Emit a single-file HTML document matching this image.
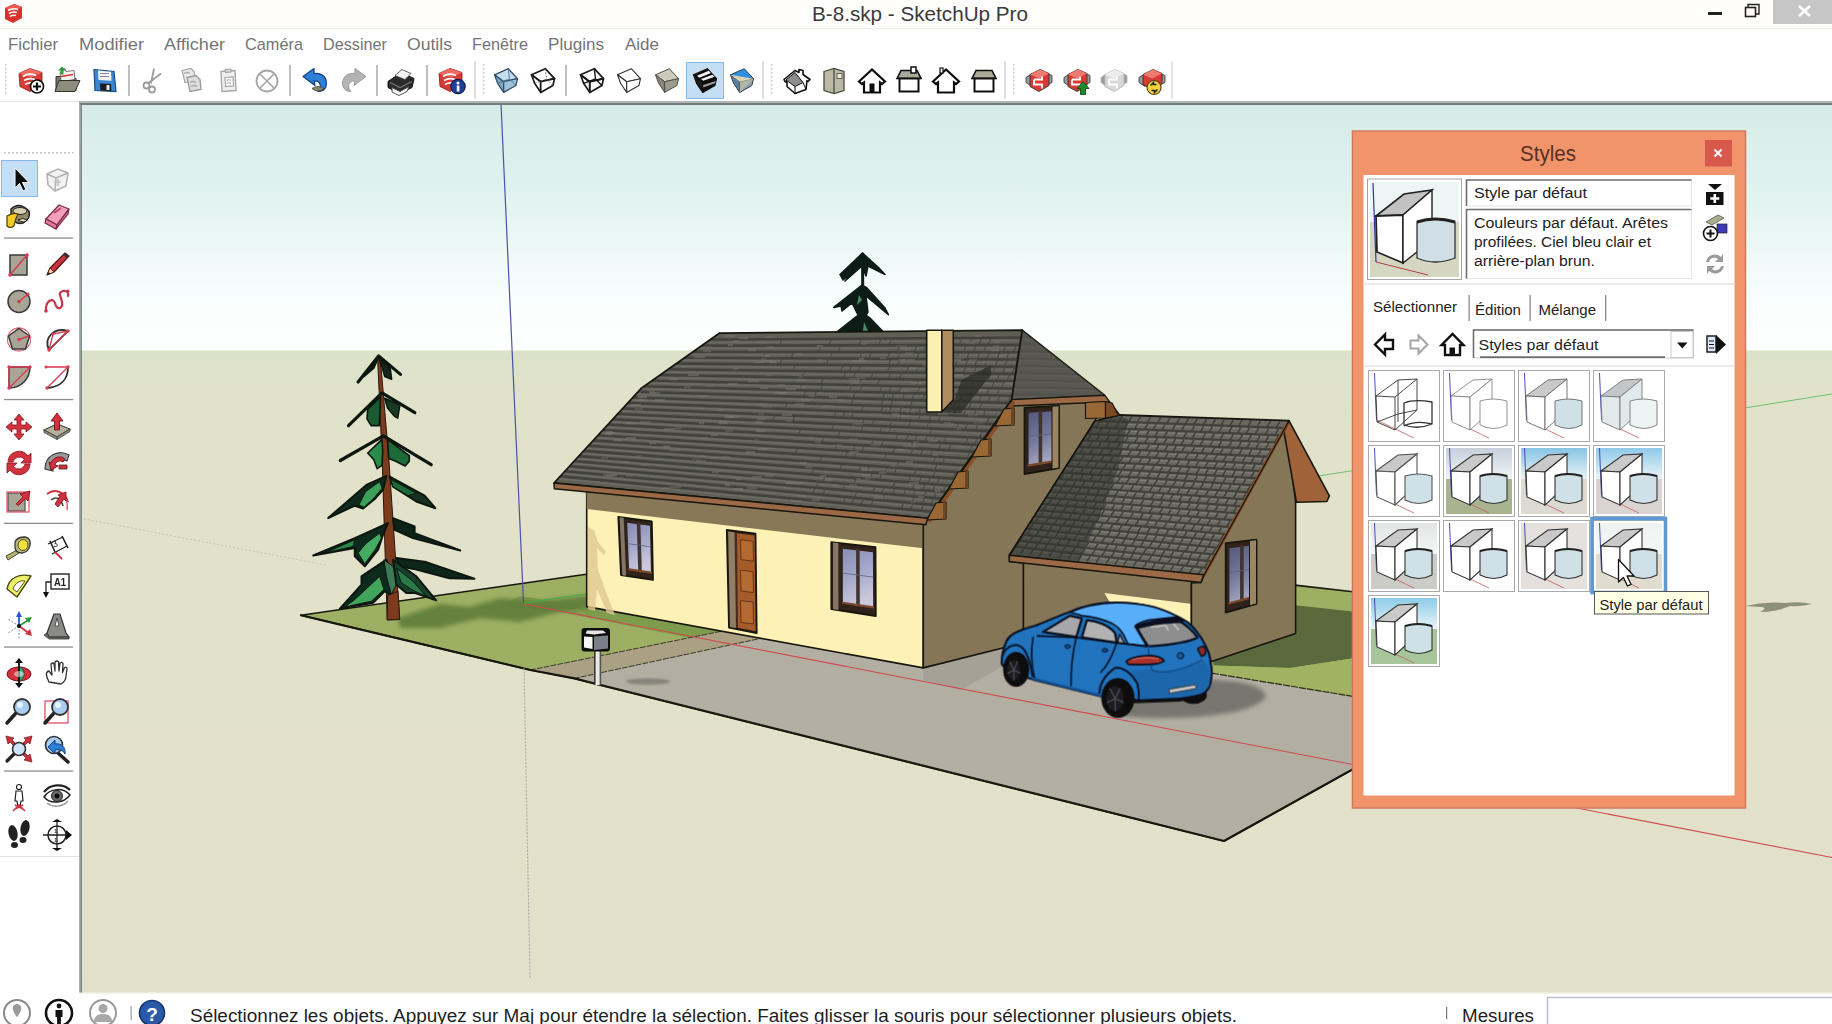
<!DOCTYPE html>
<html lang="fr"><head><meta charset="utf-8"><title>B-8.skp - SketchUp Pro</title>
<style>
*{box-sizing:border-box;margin:0;padding:0}
html,body{width:1832px;height:1024px;overflow:hidden;background:#fff;font-family:"Liberation Sans", "DejaVu Sans", sans-serif}
#app{position:relative;width:1832px;height:1024px;overflow:hidden;background:#fff}
.abs{position:absolute}
#titlebar{left:0;top:0;width:1832px;height:29px;background:#fffefc;border-bottom:1px solid #ececea}
#menubar{left:0;top:30px;width:1832px;height:29px;background:#fff}
#toolbar{left:0;top:59px;width:1832px;height:42px;background:#fff}
#lefttools{left:0;top:101px;width:80px;height:893px;background:#fff}
#viewport{left:79px;top:101px;width:1753px;height:893px;background:#e2e0c8;overflow:hidden}
#statusbar{left:0;top:994px;width:1832px;height:30px;background:#fff}
#overlay{left:0;top:0;width:1832px;height:1024px;pointer-events:none}
svg{display:block}
svg text{font-family:"Liberation Sans", "DejaVu Sans", sans-serif}
</style></head><body><div id="app">
<div id="titlebar" class="abs"><svg width="1832" height="29" viewBox="0 0 1832 29">
<g transform="translate(3,2)"><path d="M2 6 L11 2 L19 5 L19 16 L10 21 L2 17 Z" fill="#d8322f"/><path d="M2 6 L11 2 L19 5 L10 9 Z" fill="#ee5a52"/><path d="M5 8.5 q5 -3 10 -1 M6 11.5 q4 -2.5 8 -1 M7 14.5 q3 -2 6 -1" stroke="#fff" stroke-width="1.5" fill="none"/></g>
<text x="812" y="21" font-size="21" fill="#3a3a3a" text-anchor="start" font-weight="normal" textLength="216" lengthAdjust="spacingAndGlyphs">B-8.skp - SketchUp Pro</text>
<rect x="1708" y="12" width="14" height="3" fill="#222"/>
<rect x="1745.5" y="7.5" width="10" height="9" fill="none" stroke="#222" stroke-width="1.6"/><path d="M1748 7 V4.5 H1759 V14 H1756" fill="none" stroke="#222" stroke-width="1.4"/>
<rect x="1773" y="0" width="59" height="24" fill="#c6c6c6"/>
<path d="M1799 6 L1810 16 M1810 6 L1799 16" stroke="#fff" stroke-width="2.6"/>
</svg></div>
<div id="menubar" class="abs"><svg width="1832" height="29" viewBox="0 30 1832 29">
<text x="8" y="50" font-size="17" fill="#747474" text-anchor="start" font-weight="normal" textLength="50" lengthAdjust="spacingAndGlyphs">Fichier</text>
<text x="79" y="50" font-size="17" fill="#747474" text-anchor="start" font-weight="normal" textLength="65" lengthAdjust="spacingAndGlyphs">Modifier</text>
<text x="164" y="50" font-size="17" fill="#747474" text-anchor="start" font-weight="normal" textLength="61" lengthAdjust="spacingAndGlyphs">Afficher</text>
<text x="245" y="50" font-size="17" fill="#747474" text-anchor="start" font-weight="normal" textLength="58" lengthAdjust="spacingAndGlyphs">Caméra</text>
<text x="323" y="50" font-size="17" fill="#747474" text-anchor="start" font-weight="normal" textLength="64" lengthAdjust="spacingAndGlyphs">Dessiner</text>
<text x="407" y="50" font-size="17" fill="#747474" text-anchor="start" font-weight="normal" textLength="45" lengthAdjust="spacingAndGlyphs">Outils</text>
<text x="472" y="50" font-size="17" fill="#747474" text-anchor="start" font-weight="normal" textLength="56" lengthAdjust="spacingAndGlyphs">Fenêtre</text>
<text x="548" y="50" font-size="17" fill="#747474" text-anchor="start" font-weight="normal" textLength="56" lengthAdjust="spacingAndGlyphs">Plugins</text>
<text x="625" y="50" font-size="17" fill="#747474" text-anchor="start" font-weight="normal" textLength="34" lengthAdjust="spacingAndGlyphs">Aide</text>
</svg></div>
<div id="toolbar" class="abs"><svg width="1832" height="42" viewBox="0 59 1832 42"><defs><filter id="isoft"><feGaussianBlur stdDeviation="0.400"/></filter></defs>
<rect x="5" y="64" width="1.500" height="1.500" fill="#c2c2c2"/><rect x="5" y="68" width="1.500" height="1.500" fill="#c2c2c2"/><rect x="5" y="72" width="1.500" height="1.500" fill="#c2c2c2"/><rect x="5" y="76" width="1.500" height="1.500" fill="#c2c2c2"/><rect x="5" y="80" width="1.500" height="1.500" fill="#c2c2c2"/><rect x="5" y="84" width="1.500" height="1.500" fill="#c2c2c2"/><rect x="5" y="88" width="1.500" height="1.500" fill="#c2c2c2"/><rect x="5" y="92" width="1.500" height="1.500" fill="#c2c2c2"/>
<rect x="686.500" y="62.500" width="37" height="36" fill="#c3def5" stroke="#86b8ea" stroke-width="1"/>
<g filter="url(#isoft)">
<g transform="translate(15.0,64.5) scale(1.0)"><path d="M4 9 L15 4 L27 8 L27 21 L15 27 L5 22 Z" fill="#d63a35" stroke="#7e1c1a" stroke-width="0.8"/><path d="M4 9 L15 4 L27 8 L16 13 Z" fill="#ef6a60"/><path d="M8 12 q6 -4 13 -1 M9 16 q5 -3 11 -1 M10 20 q4 -2.500 9 -1" stroke="#fff" stroke-width="1.800" fill="none"/><circle cx="22" cy="22" r="6.500" fill="#fff" stroke="#111" stroke-width="1.600"/><path d="M22 18 v8 M18 22 h8" stroke="#111" stroke-width="2.200"/></g>
<g transform="translate(51.0,64.5) scale(1.0)"><path d="M5 12 h8 l2 2 h10 v12 h-20 z" fill="#7a7a6c" stroke="#33332a" stroke-width="1"/><path d="M9 8 l5 -4 l1 3 l8 -1 l1 9 l-14 2 z" fill="#f4f4f0" stroke="#555" stroke-width="0.800"/><path d="M10 4 l4 4 h-2.500 v4 h-3 v-4 h-2.500 z" fill="#2f9a3e" transform="translate(1,-2)"/><path d="M4 27 l4 -11 h21 l-5 11 z" fill="#8d8d7e" stroke="#33332a" stroke-width="1"/><path d="M10 12 l12 -2" stroke="#d33" stroke-width="1.500"/></g>
<g transform="translate(89.0,64.5) scale(1.0)"><path d="M5 5 l20 2 l2 20 l-21 -1 z" fill="#3a86d2" stroke="#1a4a88" stroke-width="1.200"/><path d="M9 6 l13 1.200 l0.500 9 l-13 -0.800 z" fill="#f2f2f2"/><path d="M11 9 h9 M11 12 h9" stroke="#7a8db0" stroke-width="1.200"/><path d="M11 19 l11 0.600 l0.400 7 l-11 -0.500 z" fill="#1c1c1c"/><rect x="17.500" y="20.500" width="3" height="5" fill="#e8e8e8"/></g>
<rect x="128.5" y="65" width="1" height="31" fill="#808080"/>
<g transform="translate(137.0,64.5) scale(1.0)"><path d="M17 4 L14 19 M24 9 L11 19" stroke="#9c9c9c" stroke-width="1.800" fill="none"/><circle cx="9.500" cy="21" r="3" fill="none" stroke="#9c9c9c" stroke-width="1.800"/><circle cx="15" cy="25" r="3" fill="none" stroke="#9c9c9c" stroke-width="1.800"/></g>
<g transform="translate(175.0,64.5) scale(1.0)"><path d="M7 6 l9 -2 l3 3 l1 9 l-10 2 z" fill="#e9e9e9" stroke="#a5a5a5" stroke-width="1.200"/><path d="M12 13 l9 -2 l4 4 l1 10 l-11 2 z" fill="#dcdcdc" stroke="#9a9a9a" stroke-width="1.300"/><path d="M9 9 q3 -2 6 0 M15 18 q3 -2 6 0 M16 22 q3 -2 6 0" stroke="#a9a9a9" stroke-width="1.400" fill="none"/></g>
<g transform="translate(213.0,64.5) scale(1.0)"><path d="M8 7 l14 -1 l1 20 l-14 1 z" fill="#efefef" stroke="#a8a8a8" stroke-width="1.400"/><path d="M12 5 l6 -0.500 l0.300 3 l-6 0.500 z" fill="#d5d5d5" stroke="#a0a0a0" stroke-width="1"/><path d="M12 13 l8 -0.600 l0.600 9 l-8 0.600 z" fill="#fafafa" stroke="#a8a8a8" stroke-width="1.200"/><path d="M14 16 q2 -1.500 4 0 M14 19 q2 -1.500 4 0" stroke="#aaa" stroke-width="1.200" fill="none"/></g>
<g transform="translate(251.0,64.5) scale(1.0)"><circle cx="16" cy="16.500" r="10.500" fill="#fff" stroke="#a5a5a5" stroke-width="1.800"/><path d="M9 9.500 l14 14 M23 9.500 l-14 14" stroke="#a5a5a5" stroke-width="1.600"/></g>
<rect x="289.5" y="65" width="1" height="31" fill="#808080"/>
<g transform="translate(300.0,64.5) scale(1.0)"><path d="M3 12 L14 4 L14 9 C22 8 28 13 26 22 C25 25 22 27 18 27 C22 23 21 16 14 16.500 L15 21 Z" fill="#2f7fd6" stroke="#123f80" stroke-width="1.200" stroke-linejoin="round"/><path d="M12 24 q6 -4 12 0 q-6 5 -12 0 z" fill="#8a8468" stroke="#4a4630" stroke-width="0.800"/></g>
<g transform="translate(337.0,64.5) scale(1.0)"><path d="M29 12 L18 4 L18 9 C10 8 4 13 6 22 C7 25 10 27 14 27 C10 23 11 16 18 16.500 L17 21 Z" fill="#b4b4b4" stroke="#9a9a9a" stroke-width="1" stroke-linejoin="round"/></g>
<rect x="376.5" y="65" width="1" height="31" fill="#808080"/>
<g transform="translate(385.0,64.5) scale(1.0)"><path d="M3 17 l13 -9 l13 6 l-2 9 l-12 6 l-12 -6 z" fill="#2a2a2a" stroke="#111" stroke-width="1"/><path d="M10 11 l7 -6 l9 4 l-6 6 z" fill="#f4f4f4" stroke="#555" stroke-width="0.900"/><path d="M7 23 l8 4 l9 -5 l-2 5 l-8 4 l-7 -3.500 z" fill="#fafafa" stroke="#444" stroke-width="0.900"/><path d="M5 18 l10 5 l12 -6" stroke="#777" stroke-width="1.200" fill="none"/></g>
<rect x="426.5" y="65" width="1" height="31" fill="#808080"/>
<g transform="translate(435.0,64.5) scale(1.0)"><path d="M4 9 L15 4 L27 8 L27 21 L15 27 L5 22 Z" fill="#d63a35" stroke="#7e1c1a" stroke-width="0.8"/><path d="M4 9 L15 4 L27 8 L16 13 Z" fill="#ef6a60"/><path d="M8 12 q6 -4 13 -1 M9 16 q5 -3 11 -1 M10 20 q4 -2.500 9 -1" stroke="#fff" stroke-width="1.800" fill="none"/><circle cx="23" cy="22" r="7.200" fill="#1f3f9a" stroke="#0d1f55" stroke-width="1.200"/><circle cx="23" cy="18.500" r="1.500" fill="#fff"/><rect x="21.800" y="21" width="2.600" height="6" fill="#fff"/></g>
<rect x="474.4" y="61" width="1.200" height="38" fill="#c9c9c9"/><rect x="483" y="64" width="1.500" height="1.500" fill="#c2c2c2"/><rect x="483" y="68" width="1.500" height="1.500" fill="#c2c2c2"/><rect x="483" y="72" width="1.500" height="1.500" fill="#c2c2c2"/><rect x="483" y="76" width="1.500" height="1.500" fill="#c2c2c2"/><rect x="483" y="80" width="1.500" height="1.500" fill="#c2c2c2"/><rect x="483" y="84" width="1.500" height="1.500" fill="#c2c2c2"/><rect x="483" y="88" width="1.500" height="1.500" fill="#c2c2c2"/><rect x="483" y="92" width="1.500" height="1.500" fill="#c2c2c2"/>
<g transform="translate(490.0,64.5) scale(1.0)"><path d="M4.5 10.3 L18.3 4.2 L27.5 14.2 L13.7 17.2 Z" fill="#c3dcee" stroke="#34506a" stroke-width="1.3" stroke-linejoin="round"/><path d="M4.5 10.3 L13.7 17.2 L13.7 27.9 L7.6 18.8 Z" fill="#7fa8c6" stroke="#34506a" stroke-width="1.3" stroke-linejoin="round"/><path d="M13.7 17.2 L27.5 14.2 L25.9 21 L13.7 27.9 Z" fill="#9fc3dc" stroke="#34506a" stroke-width="1.3" stroke-linejoin="round"/><path d="M18.3 4.2 L19.5 14.5 L7.6 18.8 M19.5 14.5 L25.9 21" stroke="#4d7390" stroke-width="0.9" fill="none"/></g>
<g transform="translate(527.0,64.5) scale(1.0)"><path d="M4.5 10.3 L18.3 4.2 L27.5 14.2 L13.7 17.2 Z" fill="#fff" stroke="#1a1a1a" stroke-width="1.7" stroke-linejoin="round"/><path d="M4.5 10.3 L13.7 17.2 L13.7 27.9 L7.6 18.8 Z" fill="#fff" stroke="#1a1a1a" stroke-width="1.7" stroke-linejoin="round"/><path d="M13.7 17.2 L27.5 14.2 L25.9 21 L13.7 27.9 Z" fill="#fff" stroke="#1a1a1a" stroke-width="1.7" stroke-linejoin="round"/><path d="M18.3 4.2 L19.5 14.5 L7.6 18.8 M19.5 14.5 L25.9 21" stroke="#666" stroke-width="0.9" fill="none" stroke-dasharray="2 1.500"/></g>
<rect x="565.5" y="65" width="1" height="31" fill="#808080"/>
<g transform="translate(576.0,64.5) scale(1.0)"><path d="M4.5 10.3 L18.3 4.2 L27.5 14.2 L13.7 17.2 Z" fill="none" stroke="#1a1a1a" stroke-width="1.7" stroke-linejoin="round"/><path d="M4.5 10.3 L13.7 17.2 L13.7 27.9 L7.6 18.8 Z" fill="none" stroke="#1a1a1a" stroke-width="1.7" stroke-linejoin="round"/><path d="M13.7 17.2 L27.5 14.2 L25.9 21 L13.7 27.9 Z" fill="none" stroke="#1a1a1a" stroke-width="1.7" stroke-linejoin="round"/><path d="M18.3 4.2 L19.5 14.5 L7.6 18.8 M19.5 14.5 L25.9 21" stroke="#1a1a1a" stroke-width="1.4" fill="none"/></g>
<g transform="translate(613.0,64.5) scale(1.0)"><path d="M4.5 10.3 L18.3 4.2 L27.5 14.2 L13.7 17.2 Z" fill="#fff" stroke="#333" stroke-width="1.1" stroke-linejoin="round"/><path d="M4.5 10.3 L13.7 17.2 L13.7 27.9 L7.6 18.8 Z" fill="#fff" stroke="#333" stroke-width="1.1" stroke-linejoin="round"/><path d="M13.7 17.2 L27.5 14.2 L25.9 21 L13.7 27.9 Z" fill="#fff" stroke="#333" stroke-width="1.1" stroke-linejoin="round"/></g>
<g transform="translate(651.0,64.5) scale(1.0)"><path d="M4.5 10.3 L18.3 4.2 L27.5 14.2 L13.7 17.2 Z" fill="#cbcbbd" stroke="#4f4f45" stroke-width="1.0" stroke-linejoin="round"/><path d="M4.5 10.3 L13.7 17.2 L13.7 27.9 L7.6 18.8 Z" fill="#85857a" stroke="#4f4f45" stroke-width="1.0" stroke-linejoin="round"/><path d="M13.7 17.2 L27.5 14.2 L25.9 21 L13.7 27.9 Z" fill="#9b9b8c" stroke="#4f4f45" stroke-width="1.0" stroke-linejoin="round"/></g>
<g transform="translate(689.0,64.5) scale(1.0)"><path d="M4.5 10.3 L18.3 4.2 L27.5 14.2 L13.7 17.2 Z" fill="#0d0d0d" stroke="#0d0d0d" stroke-width="1.2" stroke-linejoin="round"/><path d="M4.5 10.3 L13.7 17.2 L13.7 27.9 L7.6 18.8 Z" fill="#1a1a1a" stroke="#0d0d0d" stroke-width="1.2" stroke-linejoin="round"/><path d="M13.7 17.2 L27.5 14.2 L25.9 21 L13.7 27.9 Z" fill="#0d0d0d" stroke="#0d0d0d" stroke-width="1.2" stroke-linejoin="round"/><path d="M8 11.2 L19.8 6.2 L21.8 8.4 L10.4 13.2 Z M12 14.600 L23.6 10.2 L25.6 12.3 L14.2 16.2 Z" fill="#f4f4f4"/><path d="M14.2 20.5 L26.6 16.6 L26.2 18.8 L14.2 23 Z" fill="#9a9a9a"/></g>
<g transform="translate(726.0,64.5) scale(1.0)"><path d="M4.5 10.3 L18.3 4.2 L27.5 14.2 L13.7 17.2 Z" fill="#2e8ee0" stroke="#2a3f55" stroke-width="1.0" stroke-linejoin="round"/><path d="M4.5 10.3 L13.7 17.2 L13.7 27.9 L7.6 18.8 Z" fill="#5d7f9c" stroke="#2a3f55" stroke-width="1.0" stroke-linejoin="round"/><path d="M13.7 17.2 L27.5 14.2 L25.9 21 L13.7 27.9 Z" fill="#8da2ae" stroke="#2a3f55" stroke-width="1.0" stroke-linejoin="round"/><path d="M4.5 10.3 L27.5 14.2 L13.7 17.2 Z" fill="#d9d2b0"/><path d="M13.7 17.2 L27.5 14.2 L13.7 27.9 Z" fill="#c5bfa0" opacity="0.700"/></g>
<rect x="762.4" y="61" width="1.200" height="38" fill="#c9c9c9"/><rect x="771" y="64" width="1.500" height="1.500" fill="#c2c2c2"/><rect x="771" y="68" width="1.500" height="1.500" fill="#c2c2c2"/><rect x="771" y="72" width="1.500" height="1.500" fill="#c2c2c2"/><rect x="771" y="76" width="1.500" height="1.500" fill="#c2c2c2"/><rect x="771" y="80" width="1.500" height="1.500" fill="#c2c2c2"/><rect x="771" y="84" width="1.500" height="1.500" fill="#c2c2c2"/><rect x="771" y="88" width="1.500" height="1.500" fill="#c2c2c2"/><rect x="771" y="92" width="1.500" height="1.500" fill="#c2c2c2"/>
<g transform="translate(781.0,64.5) scale(1.0)"><path d="M3 15 L14 6 L18 8 L18 5 L22 6 L22 10 L29 15 L27 17 L26 16 L25 25 L14 29 L6 22 L6 17 L4.500 17.500 Z" fill="#fff" stroke="#111" stroke-width="1.600" stroke-linejoin="round"/><path d="M5 15.500 L14 8 L22 18 L14 22 Z" fill="#8d8d8d" stroke="#111" stroke-width="1"/><path d="M14 22 V29 M22 18 L25 25" stroke="#111" stroke-width="1" fill="none"/></g>
<g transform="translate(818.0,64.5) scale(1.0)"><path d="M6 7 L16 4 L26 7 L26 26 L16 29 L6 26 Z" fill="#b9b9a6" stroke="#4a4a3f" stroke-width="1.300"/><path d="M16 4 V29" stroke="#4a4a3f" stroke-width="1.300"/><rect x="19" y="9" width="5" height="5" fill="#e8e8dc" stroke="#4a4a3f" stroke-width="0.800"/></g>
<g transform="translate(856.0,64.5) scale(1.0)"><path d="M3 17 L16 5 L29 17 L26 19.500 L24 18 V28 H8 V18 L6 19.500 Z" fill="#fff" stroke="#111" stroke-width="2.200" stroke-linejoin="miter"/><rect x="13.500" y="19" width="5" height="9" fill="#111"/></g>
<g transform="translate(893.0,64.5) scale(1.0)"><path d="M4 14 L8 6 H24 L28 14 Z" fill="#a9a99a" stroke="#111" stroke-width="1.600"/><rect x="6.500" y="14" width="19" height="13" fill="#fff" stroke="#111" stroke-width="2"/><rect x="18" y="2.500" width="5" height="6" fill="#fff" stroke="#111" stroke-width="1.500"/></g>
<g transform="translate(930.0,64.5) scale(1.0)"><path d="M3 17 L16 5 L29 17 L26 19.500 L24 18 V28 H8 V18 L6 19.500 Z" fill="#fff" stroke="#111" stroke-width="2.200"/><rect x="10" y="3.500" width="3" height="5" fill="#fff" stroke="#111" stroke-width="1.200"/></g>
<g transform="translate(968.0,64.5) scale(1.0)"><path d="M4 14 L8 6 H24 L28 14 Z" fill="#a9a99a" stroke="#111" stroke-width="1.600"/><rect x="6.500" y="14" width="19" height="13" fill="#fff" stroke="#111" stroke-width="2"/></g>
<rect x="1004.4" y="61" width="1.200" height="38" fill="#c9c9c9"/><rect x="1013" y="64" width="1.500" height="1.500" fill="#c2c2c2"/><rect x="1013" y="68" width="1.500" height="1.500" fill="#c2c2c2"/><rect x="1013" y="72" width="1.500" height="1.500" fill="#c2c2c2"/><rect x="1013" y="76" width="1.500" height="1.500" fill="#c2c2c2"/><rect x="1013" y="80" width="1.500" height="1.500" fill="#c2c2c2"/><rect x="1013" y="84" width="1.500" height="1.500" fill="#c2c2c2"/><rect x="1013" y="88" width="1.500" height="1.500" fill="#c2c2c2"/><rect x="1013" y="92" width="1.500" height="1.500" fill="#c2c2c2"/>
<g transform="translate(1023.0,64.5) scale(1.0)"><path d="M3 13 L9 9 L9 22 L3 18 Z M29 11 L23 8 L23 21 L29 18 Z" fill="#9a9a9a" stroke="#333" stroke-width="0.800"/><path d="M7 10 L17 5 L26 9 L26 21 L16 27 L7 22 Z" fill="#d63a35" stroke="#333" stroke-width="0.900"/><path d="M7 10 L17 5 L26 9 L16 14 Z" fill="#f07a70"/><path d="M11 15 h8 v-3 M11 15 v5 h8 v4" stroke="#fff" stroke-width="1.800" fill="none"/></g>
<g transform="translate(1061.0,64.5) scale(1.0)"><path d="M3 13 L9 9 L9 22 L3 18 Z M29 11 L23 8 L23 21 L29 18 Z" fill="#9a9a9a" stroke="#333" stroke-width="0.800"/><path d="M7 10 L17 5 L26 9 L26 21 L16 27 L7 22 Z" fill="#d63a35" stroke="#333" stroke-width="0.900"/><path d="M7 10 L17 5 L26 9 L16 14 Z" fill="#f07a70"/><path d="M11 15 h8 v-3 M11 15 v5 h8 v4" stroke="#fff" stroke-width="1.800" fill="none"/><path d="M22 17 l6 7 h-3.500 v6 h-5 v-6 h-3.500 z" fill="#1f8a2e" stroke="#0f4f18" stroke-width="0.900"/></g>
<g transform="translate(1098.0,64.5) scale(1.0)"><path d="M3 13 L9 9 L9 22 L3 18 Z M29 11 L23 8 L23 21 L29 18 Z" fill="#9a9a9a" stroke="#b5b5b5" stroke-width="0.800"/><path d="M7 10 L17 5 L26 9 L26 21 L16 27 L7 22 Z" fill="#d8d8d8" stroke="#b5b5b5" stroke-width="0.900"/><path d="M7 10 L17 5 L26 9 L16 14 Z" fill="#ededed"/><path d="M11 15 h8 v-3 M11 15 v5 h8 v4" stroke="#fff" stroke-width="1.800" fill="none"/></g>
<g transform="translate(1136.0,64.5) scale(1.0)"><path d="M3 13 L9 9 L9 22 L3 18 Z M29 11 L23 8 L23 21 L29 18 Z" fill="#9a9a9a" stroke="#333" stroke-width="0.800"/><path d="M7 10 L17 5 L26 9 L26 19 L16 25 L7 20 Z" fill="#d63a35" stroke="#333" stroke-width="0.900"/><path d="M7 10 L17 5 L26 9 L16 14 Z" fill="#f07a70"/><circle cx="18" cy="23" r="7" fill="#f2d23c" stroke="#5a4a10" stroke-width="1.200"/><path d="M14.500 21 l3 -3 l0 2 h3 M21.500 25 l-3 3 l0 -2 h-3" stroke="#222" stroke-width="1.500" fill="none"/></g>
<rect x="1171.4" y="61" width="1.200" height="38" fill="#d5d5d5"/>
</g></svg></div>
<div id="lefttools" class="abs"><svg width="80" height="893" viewBox="0 101 80 893"><defs><filter id="lsoft"><feGaussianBlur stdDeviation="0.400"/></filter></defs>
<rect x="4" y="152" width="1.500" height="1.500" fill="#bdbdbd"/><rect x="8" y="152" width="1.500" height="1.500" fill="#bdbdbd"/><rect x="12" y="152" width="1.500" height="1.500" fill="#bdbdbd"/><rect x="16" y="152" width="1.500" height="1.500" fill="#bdbdbd"/><rect x="20" y="152" width="1.500" height="1.500" fill="#bdbdbd"/><rect x="24" y="152" width="1.500" height="1.500" fill="#bdbdbd"/><rect x="28" y="152" width="1.500" height="1.500" fill="#bdbdbd"/><rect x="32" y="152" width="1.500" height="1.500" fill="#bdbdbd"/><rect x="36" y="152" width="1.500" height="1.500" fill="#bdbdbd"/><rect x="40" y="152" width="1.500" height="1.500" fill="#bdbdbd"/><rect x="44" y="152" width="1.500" height="1.500" fill="#bdbdbd"/><rect x="48" y="152" width="1.500" height="1.500" fill="#bdbdbd"/><rect x="52" y="152" width="1.500" height="1.500" fill="#bdbdbd"/><rect x="56" y="152" width="1.500" height="1.500" fill="#bdbdbd"/><rect x="60" y="152" width="1.500" height="1.500" fill="#bdbdbd"/><rect x="64" y="152" width="1.500" height="1.500" fill="#bdbdbd"/><rect x="68" y="152" width="1.500" height="1.500" fill="#bdbdbd"/><rect x="72" y="152" width="1.500" height="1.500" fill="#bdbdbd"/>
<rect x="0" y="101" width="79" height="1" fill="#e4e4e4"/>
<rect x="1.500" y="160.500" width="36" height="36" fill="#c3def5" stroke="#86b8ea" stroke-width="1"/>
<g filter="url(#lsoft)">
<g transform="translate(3.0,163.0) scale(1.0)"><path d="M12 5 V25 L16.500 20.500 L20 28 L23 26.500 L19.500 19.500 H26 Z" fill="#111" stroke="#fff" stroke-width="1"/></g>
<g transform="translate(41.0,163.0) scale(1.0)"><path d="M6 11 L17 6 L27 10 L25 23 L14 28 L7 22 Z" fill="#f3f3f3" stroke="#b0b0b0" stroke-width="1.500"/><path d="M6 11 L15 15 L27 10 M15 15 L14 28" stroke="#b0b0b0" stroke-width="1.500" fill="none"/><path d="M13 19 h7 M17 16 v7" stroke="#c2c2c2" stroke-width="1.500"/></g>
<g transform="translate(3.0,200.0) scale(1.0)"><path d="M8 9 q8 -8 18 2 q2 8 -6 12 q-8 2 -12 -6 z" fill="#8f8a6a" stroke="#222" stroke-width="1.500"/><ellipse cx="17" cy="11" rx="7" ry="3.500" fill="#d6d2b0" stroke="#222" stroke-width="1"/><path d="M4 16 q6 -4 11 -2 q-3 5 -4 12 q-4 3 -7 0 q0 -6 0 -10 z" fill="#f0cc28" stroke="#4a3c08" stroke-width="1.200"/><path d="M15 20 q5 -3 9 0 q-3 4 -9 0 z" fill="#e8e0b8" stroke="#222" stroke-width="1"/></g>
<g transform="translate(41.0,200.0) scale(1.0)"><path d="M5 19 L18 5 L28 9 L16 25 Z" fill="#f4a0bc" stroke="#7a2a48" stroke-width="1.300" stroke-linejoin="round"/><path d="M5 19 L16 25 L15 29 L4 23 Z" fill="#e87aa0" stroke="#7a2a48" stroke-width="1.200"/><path d="M16 25 L28 9 L27 14 L15 29 Z" fill="#d9688f" stroke="#7a2a48" stroke-width="1.200"/><path d="M13 13 l7 -5" stroke="#b04a70" stroke-width="2"/></g>
<rect x="4" y="237.4" width="69" height="1.300" fill="#8e8e8e"/>
<g transform="translate(3.0,248.0) scale(1.0)"><rect x="7" y="7" width="17" height="20" fill="#a9a596" stroke="#3a3a3a" stroke-width="1.500"/><path d="M7 27 L24 7" stroke="#d83a50" stroke-width="1.500"/><circle cx="7" cy="27" r="1.800" fill="#d83a50"/><circle cx="24" cy="7" r="1.800" fill="#d83a50"/></g>
<g transform="translate(41.0,248.0) scale(1.0)"><path d="M6 27 L9 20 L24 5 L28 8 L13 24 Z" fill="#c8343a" stroke="#5a1418" stroke-width="1.200" stroke-linejoin="round"/><path d="M6 27 L9 20 L13 24 Z" fill="#e8d2a8" stroke="#5a1418" stroke-width="0.800"/><path d="M6 27 l1.500 -3 l1.800 1.800 z" fill="#222"/><path d="M24 5 L28 8 L26 10 L22 7 Z" fill="#333"/></g>
<g transform="translate(3.0,285.0) scale(1.0)"><circle cx="16" cy="16.500" r="11" fill="#a9a596" stroke="#3a3a3a" stroke-width="1.500"/><path d="M16 16.500 L25 9" stroke="#d83a50" stroke-width="1.500"/><circle cx="16" cy="16.500" r="1.800" fill="#d83a50"/><circle cx="25" cy="9" r="1.600" fill="#d83a50"/></g>
<g transform="translate(41.0,285.0) scale(1.0)"><path d="M5 26 C4 16 12 12 14 18 C16 26 22 24 21 17 C20 10 16 8 22 6 C26 5 28 8 27 11" fill="none" stroke="#c8344c" stroke-width="2.200" stroke-linecap="round"/><circle cx="5" cy="26" r="1.800" fill="#c8344c"/><circle cx="27" cy="6" r="1.600" fill="#c8344c"/></g>
<g transform="translate(3.0,323.0) scale(1.0)"><circle cx="16" cy="16.500" r="11.500" fill="none" stroke="#e06a7a" stroke-width="1.300"/><path d="M16 5.500 L26.500 13 L22.500 26 L9.500 26 L5.500 13 Z" fill="#a9a596" stroke="#3a3a3a" stroke-width="1.500"/><path d="M16 16.500 L26 13" stroke="#d83a50" stroke-width="1.400"/><circle cx="16" cy="16.500" r="1.800" fill="#d83a50"/></g>
<g transform="translate(41.0,323.0) scale(1.0)"><path d="M8 27 C2 14 14 4 27 8 Z" fill="#fff" stroke="#333" stroke-width="1.800"/><path d="M8 27 L27 8 M8 27 L12 11 L27 8" stroke="#d83a50" stroke-width="1.300" fill="none"/><circle cx="8" cy="27" r="1.700" fill="#d83a50"/><circle cx="27" cy="8" r="1.700" fill="#d83a50"/><circle cx="12" cy="11" r="1.500" fill="#d83a50"/></g>
<g transform="translate(3.0,361.0) scale(1.0)"><path d="M6 6 H27 C27 18 18 27 6 27 Z" fill="#a9a596" stroke="#3a3a3a" stroke-width="1.500"/><path d="M6 27 L27 6 M6 6 L6 27 M6 6 H27" stroke="#d83a50" stroke-width="1.300"/><circle cx="6" cy="6" r="1.700" fill="#d83a50"/><circle cx="27" cy="6" r="1.700" fill="#d83a50"/><circle cx="6" cy="27" r="1.700" fill="#d83a50"/></g>
<g transform="translate(41.0,361.0) scale(1.0)"><path d="M6 27 C20 26 27 18 27 6" fill="none" stroke="#333" stroke-width="1.800"/><path d="M6 27 L27 6 M5 6 H27" stroke="#d83a50" stroke-width="1.300" fill="none"/><circle cx="6" cy="27" r="1.700" fill="#d83a50"/><circle cx="27" cy="6" r="1.700" fill="#d83a50"/><circle cx="5" cy="6" r="1.500" fill="#d83a50"/></g>
<rect x="4" y="398.9" width="69" height="1.300" fill="#8e8e8e"/>
<g transform="translate(3.0,411.0) scale(1.0)"><path d="M16 3 L21 9 H18 V14 H23 V11 L29 16 L23 21 V18 H18 V23 H21 L16 29 L11 23 H14 V18 H9 V21 L3 16 L9 11 V14 H14 V9 H11 Z" fill="#d2303c" stroke="#8a1420" stroke-width="0.800"/></g>
<g transform="translate(41.0,411.0) scale(1.0)"><path d="M3 19 L16 13 L29 18 L16 26 Z" fill="#b5b1a0" stroke="#4a4a40" stroke-width="1.200"/><path d="M3 19 L16 26 L16 28.500 L3 21.500 Z M16 26 L29 18 V20.500 L16 28.500 Z" fill="#8d8a7a" stroke="#4a4a40" stroke-width="0.800"/><path d="M16 2 L22 10 H18.500 V19 H13.500 V10 H10 Z" fill="#d2303c" stroke="#7a1018" stroke-width="0.900"/></g>
<g transform="translate(3.0,447.0) scale(1.0)"><path d="M5 15 A11 11 0 0 1 25 9 L28 6 V16 H18 L21.500 12.500 A6.500 6.500 0 0 0 10 15 Z" fill="#d2303c" stroke="#8a1420" stroke-width="0.800"/><path d="M27 17 A11 11 0 0 1 7 23 L4 26 V16 H14 L10.500 19.500 A6.500 6.500 0 0 0 22 17 Z" fill="#d2303c" stroke="#8a1420" stroke-width="0.800"/></g>
<g transform="translate(41.0,447.0) scale(1.0)"><path d="M4 22 C4 8 18 2 28 8 L26 14 C18 10 12 14 12 24 Z" fill="#9a9a98" stroke="#444" stroke-width="1.200"/><path d="M10 16 C12 10 20 8 24 12 L22 15 C19 13 15 14 14 18 L17 19 L10 23 L8 15 Z" fill="#d2303c" stroke="#7a1018" stroke-width="0.900"/><path d="M18 18 h8 v4 h-8 z" fill="#c8343a" stroke="#5a1418" stroke-width="0.800"/></g>
<g transform="translate(3.0,484.0) scale(1.0)"><rect x="5" y="9" width="17" height="18" fill="#a9a596" stroke="#555" stroke-width="1.300"/><rect x="4" y="8" width="22" height="20" fill="none" stroke="#e05a6a" stroke-width="1.300"/><path d="M13 20 L20 13 L17 10 L27 7 L25 17 L22.500 14.500 L15.500 21.500 Z" fill="#d2303c" stroke="#7a1018" stroke-width="0.800"/></g>
<g transform="translate(41.0,484.0) scale(1.0)"><path d="M6 10 C14 4 24 8 27 18" fill="none" stroke="#d2303c" stroke-width="2"/><path d="M10 16 C15 12 20 14 22 22" fill="none" stroke="#444" stroke-width="1.600"/><path d="M26 26 C27 20 25 14 22 12" fill="none" stroke="#e06a7a" stroke-width="1.600"/><path d="M14 20 L19 12 L17 11 L25 8 L25 17 L23 15 L17 23 Z" fill="#d2303c" stroke="#7a1018" stroke-width="0.800"/></g>
<rect x="4" y="522.6999999999999" width="69" height="1.300" fill="#8e8e8e"/>
<g transform="translate(3.0,532.0) scale(1.0)"><path d="M3 24 L14 18 L16 21 L5 28 Z" fill="#b5b06a" stroke="#4a4630" stroke-width="1"/><path d="M12 10 q2 -5 10 -5 q6 1 5 8 q-1 7 -8 8 q-7 0 -7 -6 z" fill="#b8b48a" stroke="#3a3a2a" stroke-width="1.300"/><ellipse cx="20" cy="13" rx="5" ry="5.500" fill="#f0e040" stroke="#5a5410" stroke-width="1"/></g>
<g transform="translate(41.0,532.0) scale(1.0)"><path d="M7 12 L22 5 M11 22 L26 14" stroke="#222" stroke-width="1.300"/><path d="M9 9 L14 20 M21 4 L27 16" stroke="#222" stroke-width="1.600"/><path d="M14 20 L21 27" stroke="#d2303c" stroke-width="1.800"/><text x="12" y="15" font-size="9" fill="#222" transform="rotate(-25 14 13)">3</text></g>
<g transform="translate(3.0,569.0) scale(1.0)"><path d="M4 20 C6 9 16 4 28 7 L14 28 Z" fill="#eef06a" stroke="#4a4a10" stroke-width="1.400" stroke-linejoin="round"/><path d="M10 20 C12 14 17 11 22 12 L14 23 Z" fill="#fff" stroke="#4a4a10" stroke-width="0.900"/></g>
<g transform="translate(41.0,569.0) scale(1.0)"><rect x="10" y="5" width="18" height="15" fill="#fff" stroke="#222" stroke-width="1.400"/><text x="13" y="17" font-size="11" font-weight="bold" fill="#222" textLength="12" lengthAdjust="spacingAndGlyphs">A1</text><path d="M10 13 H5 V24" fill="none" stroke="#222" stroke-width="1.300"/><path d="M2 23 h6 l-3 6 z" fill="#111"/></g>
<g transform="translate(3.0,609.0) scale(1.0)"><path d="M16 17 V4" stroke="#2a5ad0" stroke-width="1.800"/><path d="M13 8 l3 -6 l3 6 z" fill="#2a5ad0"/><path d="M16 17 L27 10" stroke="#2a9a3a" stroke-width="1.800"/><path d="M22 9 l7 -1 l-3 6 z" fill="#2a9a3a"/><path d="M16 17 L27 25" stroke="#d2303c" stroke-width="1.800"/><path d="M22 25 l7 2 l-2 -7 z" fill="#d2303c"/><path d="M16 17 L5 24 M16 17 L5 10 M16 17 V30" stroke="#888" stroke-width="1" stroke-dasharray="2 1.500"/><circle cx="16" cy="17" r="2" fill="#111"/></g>
<g transform="translate(41.0,609.0) scale(1.0)"><path d="M6 24 L13 5 H19 L25 24 L28 28 H8 Z" fill="#8a8a88" stroke="#333" stroke-width="1.200"/><path d="M14 17 l2 -8 l2 8 z" fill="#fff" stroke="#333" stroke-width="0.800"/><path d="M6 24 L3 26 L8 30 L28 30 V28 H8 Z" fill="#6a6a68" stroke="#333" stroke-width="0.800"/></g>
<rect x="4" y="646.4" width="69" height="1.300" fill="#8e8e8e"/>
<g transform="translate(3.0,656.0) scale(1.0)"><ellipse cx="16" cy="18" rx="12" ry="7" fill="#d2303c" stroke="#7a1018" stroke-width="1"/><path d="M16 11 a5 7 0 0 1 0 14 z" fill="#3aa878" stroke="#155a3a" stroke-width="1"/><path d="M16 4 V30" stroke="#111" stroke-width="1.800"/><path d="M12 7 l4 -5 l4 5 z M12 27 l4 5 l4 -5 z" fill="#111"/><ellipse cx="16" cy="18" rx="5" ry="3" fill="#fff" opacity="0.500"/></g>
<g transform="translate(41.0,656.0) scale(1.0)"><path d="M8 26 C5 20 4 16 8 15 L11 19 L10 8 q2 -2 3 0 l1 7 l0 -9 q2 -2 3.500 0 l0.500 9 l1 -8 q2 -1.500 3 0.500 l-0.500 9 l2 -5 q2 -1 2.500 1 L25 20 q0 5 -5 8 z" fill="#fff" stroke="#333" stroke-width="1.300" stroke-linejoin="round"/></g>
<g transform="translate(3.0,695.0) scale(1.0)"><path d="M4 28 L14 17" stroke="#222" stroke-width="3.500" stroke-linecap="round"/><circle cx="19" cy="12" r="8" fill="#a9cdf0" stroke="#333" stroke-width="1.800"/><circle cx="17" cy="10" r="3" fill="#e6f2fc"/></g>
<g transform="translate(41.0,695.0) scale(1.0)"><rect x="4" y="6" width="23" height="22" fill="none" stroke="#e0506a" stroke-width="1.300"/><path d="M4 28 L14 17" stroke="#222" stroke-width="3.500" stroke-linecap="round"/><circle cx="19" cy="12" r="8" fill="#a9cdf0" stroke="#333" stroke-width="1.800"/><circle cx="17" cy="10" r="3" fill="#e6f2fc"/></g>
<g transform="translate(3.0,733.0) scale(1.0)"><path d="M3 3 l8 2 l-2 2 l5 5 l-2 2 l-5 -5 l-2 2 z M29 3 l-2 8 l-2 -2 l-5 5 l-2 -2 l5 -5 l-2 -2 z M29 29 l-8 -2 l2 -2 l-5 -5 l2 -2 l5 5 l2 -2 z" fill="#c8303c" stroke="#7a1018" stroke-width="0.700"/><path d="M4 28 L11 21" stroke="#222" stroke-width="3.200" stroke-linecap="round"/><circle cx="16" cy="16" r="6.500" fill="#cfe4f8" stroke="#333" stroke-width="1.600"/></g>
<g transform="translate(41.0,733.0) scale(1.0)"><path d="M17 20 L27 29" stroke="#222" stroke-width="3.500" stroke-linecap="round"/><circle cx="13" cy="12" r="8.500" fill="#a9cdf0" stroke="#333" stroke-width="1.600"/><path d="M7 14 L14 7 V11 C20 10 25 14 24 21 C22 17 18 16 14 17 V21 Z" fill="#2f7fd6" stroke="#123f80" stroke-width="1"/></g>
<rect x="4" y="770.4" width="69" height="1.300" fill="#8e8e8e"/>
<g transform="translate(3.0,781.0) scale(1.0)"><circle cx="16" cy="6" r="2.500" fill="#fff" stroke="#222" stroke-width="1.200"/><path d="M13 10 h6 l1 10 h-2 l-1 6 h-2 l-1 -6 h-2 z" fill="#fff" stroke="#222" stroke-width="1.200"/><path d="M10 30 l6 -6 l6 6 M12 24 l8 4 M20 24 l-8 4" stroke="#d2303c" stroke-width="1.500" fill="none"/></g>
<g transform="translate(41.0,781.0) scale(1.0)"><path d="M3 16 C9 7 22 6 29 14 C23 22 10 24 3 16 Z" fill="#fff" stroke="#222" stroke-width="1.500"/><circle cx="16" cy="15" r="5.500" fill="#6a6a6a" stroke="#222" stroke-width="1"/><circle cx="16" cy="15" r="2.500" fill="#111"/><path d="M3 11 C9 3 22 2 29 9" fill="none" stroke="#222" stroke-width="2.200"/><path d="M6 22 C12 27 22 26 27 20" fill="none" stroke="#999" stroke-width="1.500"/></g>
<g transform="translate(3.0,819.0) scale(1.0)"><ellipse cx="10" cy="14" rx="4.500" ry="8" fill="#222" transform="rotate(-12 10 14)"/><ellipse cx="11.500" cy="26" rx="3.500" ry="3" fill="#222"/><ellipse cx="22" cy="9" rx="4.500" ry="8" fill="#222" transform="rotate(12 22 9)"/><ellipse cx="20" cy="21" rx="3.500" ry="3" fill="#222"/></g>
<g transform="translate(41.0,819.0) scale(1.0)"><circle cx="16" cy="16" r="9" fill="#fff" stroke="#222" stroke-width="1.500"/><path d="M2 16 H30 M16 3 V29" stroke="#222" stroke-width="1.300"/><path d="M25 11 l6 5 l-6 5 z M11 3 l5 -3 l5 3 z M11 29 l5 3 l5 -3 z" fill="#111"/><text x="13" y="14" font-size="6" fill="#222">1</text><text x="13" y="23" font-size="6" fill="#222">1</text></g>
</g>
<rect x="0" y="856" width="80" height="1" fill="#e3e3e3"/>
</svg></div>
<div id="viewport" class="abs"></div>
<svg class="abs" style="left:79px;top:101px" width="1753" height="893" viewBox="79 101 1753 893">
<defs>
<linearGradient id="sky" x1="0" y1="0" x2="0" y2="1"><stop offset="0" stop-color="#d6ebe7"/><stop offset="0.39" stop-color="#e2f3f0"/><stop offset="0.63" stop-color="#f0faf8"/><stop offset="0.8" stop-color="#f8fefd"/><stop offset="1" stop-color="#ffffff"/></linearGradient>
<linearGradient id="gnd" x1="0" y1="0" x2="0" y2="1"><stop offset="0" stop-color="#dae2c8"/><stop offset="0.03" stop-color="#dfe2ca"/><stop offset="0.2" stop-color="#e2e1c9"/><stop offset="1" stop-color="#e2e0c8"/></linearGradient>
<linearGradient id="glass" x1="0" y1="0" x2="0.3" y2="1"><stop offset="0" stop-color="#868cb2"/><stop offset="0.55" stop-color="#a6abcc"/><stop offset="1" stop-color="#cbc7dc"/></linearGradient>
<linearGradient id="glass2" x1="0" y1="0" x2="0.3" y2="1"><stop offset="0" stop-color="#52577c"/><stop offset="0.6" stop-color="#777b9e"/><stop offset="1" stop-color="#a3a5be"/></linearGradient>
<pattern id="stripes" width="40" height="7.2" patternUnits="userSpaceOnUse" patternTransform="rotate(1.2)"><rect width="40" height="7.2" fill="#5d5c57"/><rect y="4.4" width="40" height="2.8" fill="#484843"/><rect y="0" width="40" height="1.2" fill="#686761"/></pattern>
<pattern id="tiles" width="13" height="12" patternUnits="userSpaceOnUse" patternTransform="rotate(4)"><rect width="13" height="12" fill="#72716a"/><rect y="4.6" width="13" height="1.6" fill="#474742"/><rect y="10.6" width="13" height="1.6" fill="#474742"/><rect x="3" y="0" width="1.2" height="5" fill="#4d4d48"/><rect x="9.5" y="6" width="1.2" height="5" fill="#4d4d48"/><rect x="0" y="0" width="13" height="1.3" fill="#787770"/><rect x="0" y="6.2" width="13" height="1.3" fill="#787770"/></pattern>
<linearGradient id="fadeg" x1="0" y1="0" x2="1" y2="0"><stop offset="0" stop-color="#fff" stop-opacity="0"/><stop offset="1" stop-color="#fff" stop-opacity="1"/></linearGradient><mask id="fade" maskUnits="userSpaceOnUse" x="700" y="320" width="340" height="220"><rect x="700" y="320" width="340" height="220" fill="url(#fadeg)"/></mask>
<filter id="soft"><feGaussianBlur stdDeviation="0.45"/></filter>
<filter id="blur1"><feGaussianBlur stdDeviation="1"/></filter>
<filter id="blur2"><feGaussianBlur stdDeviation="2"/></filter>
</defs>
<rect x="79" y="101" width="1753" height="5" fill="#d6ebe7"/><rect x="79" y="105" width="1753" height="246" fill="url(#sky)"/>
<rect x="79" y="350.5" width="1753" height="644" fill="url(#gnd)"/>
<g filter="url(#soft)">
<polyline points="862.5,254 863,332" fill="none" stroke="#0f1d16" stroke-width="3" stroke-linejoin="round" stroke-linecap="round"/>
<path d="M862.5 253 L840 274.5 L843 280 L852 272 L845 281 L862 266 L866 276 L868 266 L885 274.5 L878 267 z" fill="#0f1d16" stroke="#0f1d16" stroke-width="1.5" stroke-linejoin="round"/>
<path d="M862 285 L833.7 307.4 L841 306 L842 311 L852 303 L858 315 L862 322 L868 312 L866 296 L888.4 314.7 L885 308 L867 288 z" fill="#0f1d16" stroke="#0f1d16" stroke-width="1.5" stroke-linejoin="round"/>
<path d="M862 312 L836.6 332 L883.5 332 L870 318 z" fill="#0f1d16" stroke="#0f1d16" stroke-width="1.5" stroke-linejoin="round"/>
<path d="M859 295 L857 305 L862 300 z M864 322 L863 331 L868 331 z" fill="#4f8a66"/>
</g>
<g filter="url(#soft)">
<polyline points="524,603 1832,394" fill="none" stroke="#6fbf73" stroke-width="1.0" stroke-linejoin="round" stroke-linecap="round"/>
<path d="M1745 606 q20 -5 40 -3 q15 -2 27 1 q-14 3 -22 2 q-14 6 -30 6 q8 -4 2 -5 z" fill="#8e917a"/>
<polygon points="301,615.2 586.3,574.2 849,534 1297,585.4 1617,622 1454,713 1224,841 574.4,678.4 530.4,670" fill="#9daf62" stroke="#17170f" stroke-width="1.6" stroke-linejoin="round"/>
<polygon points="520,596 586.7,606.6 721,631.3 700,640 560,612 500,606" fill="#7f9c4e"/>
<path d="M398 618 L440 604 L470 607 L500 598 L540 601 L600 594 L640 598 L610 606 L560 612 L520 622 L480 618 L440 628 L400 628 z" fill="#5f7d3a" filter="url(#blur2)" opacity="0.9"/>
<polygon points="1295.6,605.2 1420,619 1420,650 1352,658.5 1290,668 1214,665.5 1212.5,661 1295.6,633.5" fill="#5a6b3c"/>
<polygon points="1214,665.5 1290,668 1352,658.5 1420,650 1430,708 1349.6,694.5 1212.5,673.3" fill="#a1b364"/>
<polygon points="530.4,670 574.4,678.4 761.6,638.2 721,631.3" fill="#aba084"/>
<polygon points="574.4,678.4 1224,841 1454,713 1212.5,673.3 1205,668.5 1191.4,668.2 1023.5,642.8 923.3,667.9 761.6,638.2" fill="#b2aea2"/>
<polygon points="923.3,667.9 1023.5,642.8 1023.5,650 1000,668 960,690 923.3,680" fill="#a5a197"/>
<polyline points="530.4,670 721,631.3" fill="none" stroke="#3a3a2a" stroke-width="1.0" stroke-linejoin="round" stroke-linecap="round" stroke-dasharray="5 2"/>
<polyline points="574.4,678.4 761.6,638.2" fill="none" stroke="#3a3a2a" stroke-width="1.0" stroke-linejoin="round" stroke-linecap="round" stroke-dasharray="5 2"/>
<polyline points="1212.5,673.3 1454,713" fill="none" stroke="#2a2a1a" stroke-width="1.2" stroke-linejoin="round" stroke-linecap="round" stroke-dasharray="6 2"/>
<polyline points="301,615.2 530.4,670 574.4,678.4 1224,841 1454,713" fill="none" stroke="#17170f" stroke-width="2.2" stroke-linejoin="round" stroke-linecap="round"/>
<polyline points="524,604 1832,857.5" fill="none" stroke="#cf4a4c" stroke-width="1.1" stroke-linejoin="round" stroke-linecap="round"/>
<polyline points="524,668 530,978" fill="none" stroke="#a5a5a0" stroke-width="0.9" stroke-linejoin="round" stroke-linecap="round" stroke-dasharray="1.5 2"/>
<polyline points="84,519 326,565" fill="none" stroke="#c4c4b4" stroke-width="0.9" stroke-linejoin="round" stroke-linecap="round" stroke-dasharray="1.5 2.5"/>
<polyline points="524,603 586,594" fill="none" stroke="#3fae4a" stroke-width="1.0" stroke-linejoin="round" stroke-linecap="round"/>
<path d="M1120 716 Q1180 722 1235 712 Q1272 702 1264 692 Q1250 680 1211 680 L1100 690 z" fill="#77766e" filter="url(#blur2)"/>
<ellipse cx="648" cy="681.5" rx="22" ry="3.2" fill="#85837a" filter="url(#blur1)"/>
<polygon points="586.7,487 923.3,523 923.3,667.9 586.7,606.6" fill="#fef1b6" stroke="#17170f" stroke-width="1.6" stroke-linejoin="round"/>
<polygon points="586.7,488 923.3,524.5 923.3,548.3 586.7,509" fill="#887858"/>
<path d="M588 527 l6 3 l4 12 l8 10 l-2 3 l-7 -7 l1 22 l8 22 l9 23 l-8 -2 l-10 -24 l-2 22 l-7 -2 z" fill="#e0c894" opacity="0.8"/>
<polygon points="923.3,524.5 1011.6,403 1106,398 1095,421 1009.4,555.3 1009.4,561.5 1023.5,563 1023.5,642.8 923.3,667.9" fill="#867658" stroke="#17170f" stroke-width="1.6" stroke-linejoin="round"/>
<polygon points="1024.5,407.6 1059,405.8 1059,468 1024.5,474" fill="#33221a" stroke="#17170f" stroke-width="1.8" stroke-linejoin="round"/><polygon points="1028.64,412.65568 1056.585,410.92552 1056.585,460.92072 1028.64,465.37248" fill="url(#glass2)"/><polyline points="1040.3769,411.9290128 1040.3769,463.5027408" fill="none" stroke="#40352e" stroke-width="3.6" stroke-linejoin="round" stroke-linecap="round"/><polyline points="1028.64,465.37248 1056.585,460.92072" fill="none" stroke="#7a4a2a" stroke-width="2.2" stroke-linejoin="round" stroke-linecap="round"/><polyline points="1028.64,436.37824 1056.585,433.42336" fill="none" stroke="#5a5f80" stroke-width="0.8" stroke-linejoin="round" stroke-linecap="round"/>
<polygon points="1052,406.2 1059,405.8 1059,468 1052,469.2" fill="#9d8462" stroke="#17170f" stroke-width="1" stroke-linejoin="round"/>
<polygon points="1023.5,562 1191.4,581 1191.4,668.2 1023.5,642.8" fill="#867658" stroke="#17170f" stroke-width="1.4" stroke-linejoin="round"/>
<polygon points="1104.4,593 1190.5,603.8 1190.5,645 1135,645 1112,606" fill="#fef1b6"/>
<polygon points="1286,426 1295.6,502 1295.6,633.5 1191.4,668.2 1191.4,583 1201,582.4 1203.7,575.8" fill="#867658" stroke="#17170f" stroke-width="1.6" stroke-linejoin="round"/>
<polygon points="1225.7,543.2 1256.5,539.7 1256.5,603.8 1225.7,612.6" fill="#33221a" stroke="#17170f" stroke-width="1.8" stroke-linejoin="round"/><polygon points="1229.396,548.2811200000001 1254.344,545.1026800000001 1254.344,596.67948 1229.396,603.29232" fill="url(#glass2)"/><polyline points="1241.87,546.6919 1241.87,599.9859" fill="none" stroke="#40352e" stroke-width="3.6" stroke-linejoin="round" stroke-linecap="round"/><polyline points="1229.396,603.29232 1254.344,596.67948" fill="none" stroke="#7a4a2a" stroke-width="2.2" stroke-linejoin="round" stroke-linecap="round"/><polyline points="1229.396,573.0361600000001 1254.344,568.3122400000001" fill="none" stroke="#5a5f80" stroke-width="0.8" stroke-linejoin="round" stroke-linecap="round"/>
<polygon points="1249.5,540.5 1256.5,539.7 1256.5,603.8 1249.5,605.8" fill="#9d8462" stroke="#17170f" stroke-width="1" stroke-linejoin="round"/>
<polygon points="1289,420.7 1329.4,495.8 1326.8,501.5 1296.5,502.3 1284,432" fill="#a06238" stroke="#17170f" stroke-width="1.6" stroke-linejoin="round"/>
<clipPath id="cpg"><polygon points="1095,421 1119.8,415 1289,420.7 1203.7,575.8 1009.4,555.3"/></clipPath>
<g clip-path="url(#cpg)">
<rect x="1000" y="410" width="300" height="175" fill="#6a6961"/>
<path d="M1000 417.1L1300 428.6M1000 423.5L1300 436.1M1000 429.9L1300 443.5M1000 436.3L1300 451.0M1000 442.7L1300 458.5M1000 449.1L1300 466.0M1000 455.5L1300 473.5M1000 461.9L1300 481.0M1000 468.3L1300 488.5M1000 474.7L1300 496.0M1000 481.1L1300 503.5M1000 487.5L1300 510.9M1000 493.9L1300 518.4M1000 500.3L1300 525.9M1000 506.7L1300 533.4M1000 513.1L1300 540.9M1000 519.5L1300 548.4M1000 525.9L1300 555.9M1000 532.3L1300 563.4M1000 538.7L1300 570.8M1000 545.1L1300 578.3" stroke="#42423c" stroke-width="2.2" fill="none"/>
<path d="M1000 419.5L1300 431.0M1000 425.9L1300 438.5M1000 432.3L1300 445.9M1000 438.7L1300 453.4M1000 445.1L1300 460.9M1000 451.5L1300 468.4M1000 457.9L1300 475.9M1000 464.3L1300 483.4M1000 470.7L1300 490.9M1000 477.1L1300 498.4M1000 483.5L1300 505.9M1000 489.9L1300 513.3M1000 496.3L1300 520.8M1000 502.7L1300 528.3M1000 509.1L1300 535.8M1000 515.5L1300 543.3M1000 521.9L1300 550.8M1000 528.3L1300 558.3M1000 534.7L1300 565.8M1000 541.1L1300 573.2M1000 547.5L1300 580.7" stroke="#7d7c74" stroke-width="1.3" fill="none"/>
<path d="M1000.9 411.9L997.3 417.0M1010.3 412.2L1006.7 417.4M1020.3 412.6L1016.7 417.8M1029.6 412.9L1026.0 418.1M1039.0 413.2L1035.4 418.5M1048.5 413.5L1044.9 418.8M1057.3 413.8L1053.7 419.2M1066.7 414.2L1063.1 419.5M1076.3 414.5L1072.7 419.9M1086.1 414.8L1082.5 420.3M1094.8 415.1L1091.2 420.6M1103.8 415.4L1100.2 420.9M1112.6 415.8L1109.0 421.3M1122.4 416.1L1118.8 421.7M1132.0 416.4L1128.4 422.0M1140.7 416.7L1137.1 422.4M1150.8 417.1L1147.2 422.7M1160.8 417.4L1157.2 423.1M1170.4 417.7L1166.8 423.5M1179.9 418.1L1176.3 423.9M1188.8 418.4L1185.2 424.2M1197.4 418.7L1193.8 424.5M1206.8 419.0L1203.2 424.9M1215.5 419.3L1211.9 425.2M1224.4 419.6L1220.8 425.5M1233.3 419.9L1229.7 425.9M1242.0 420.2L1238.4 426.2M1251.3 420.5L1247.7 426.6M1260.5 420.9L1256.9 426.9M1270.4 421.2L1266.8 427.3M1279.8 421.5L1276.2 427.7M1289.3 421.9L1285.7 428.0M1298.7 422.2L1295.1 428.4M1005.4 418.3L1001.8 423.6M1014.4 418.7L1010.8 424.0M1024.5 419.1L1020.9 424.4M1034.6 419.4L1031.0 424.8M1044.5 419.8L1040.9 425.2M1054.1 420.2L1050.5 425.6M1063.2 420.5L1059.6 426.0M1072.2 420.9L1068.6 426.4M1081.2 421.2L1077.6 426.8M1089.9 421.6L1086.3 427.1M1099.6 421.9L1096.0 427.5M1108.9 422.3L1105.3 427.9M1118.7 422.7L1115.1 428.3M1127.9 423.0L1124.3 428.7M1137.9 423.4L1134.3 429.1M1147.8 423.8L1144.2 429.5M1156.4 424.1L1152.8 429.9M1165.3 424.4L1161.7 430.3M1175.3 424.8L1171.7 430.7M1184.6 425.2L1181.0 431.1M1194.7 425.6L1191.1 431.5M1203.9 425.9L1200.3 431.9M1212.6 426.2L1209.0 432.3M1222.1 426.6L1218.5 432.7M1231.9 427.0L1228.3 433.1M1240.9 427.3L1237.3 433.4M1249.6 427.6L1246.0 433.8M1258.7 428.0L1255.1 434.2M1268.8 428.4L1265.2 434.6M1278.5 428.7L1274.9 435.0M1287.3 429.1L1283.7 435.4M1296.2 429.4L1292.6 435.7M1000.1 424.5L996.5 429.8M1009.9 424.9L1006.3 430.2M1018.8 425.3L1015.2 430.6M1028.2 425.7L1024.6 431.0M1037.5 426.1L1033.9 431.5M1046.4 426.5L1042.8 431.9M1056.1 426.9L1052.5 432.3M1064.9 427.2L1061.3 432.7M1074.4 427.6L1070.8 433.1M1083.2 428.0L1079.6 433.5M1092.4 428.4L1088.8 434.0M1101.4 428.8L1097.8 434.4M1110.4 429.1L1106.8 434.8M1120.4 429.6L1116.8 435.2M1130.2 430.0L1126.6 435.7M1139.3 430.3L1135.7 436.1M1149.2 430.8L1145.6 436.5M1158.1 431.1L1154.5 436.9M1167.3 431.5L1163.7 437.4M1177.2 431.9L1173.6 437.8M1186.8 432.3L1183.2 438.2M1195.5 432.7L1191.9 438.6M1205.6 433.1L1202.0 439.1M1214.5 433.5L1210.9 439.5M1223.5 433.9L1219.9 439.9M1233.3 434.3L1229.7 440.4M1242.4 434.6L1238.8 440.8M1251.4 435.0L1247.8 441.2M1260.1 435.4L1256.5 441.6M1268.8 435.8L1265.2 442.0M1278.3 436.2L1274.7 442.4M1287.3 436.5L1283.7 442.8M1296.8 436.9L1293.2 443.2M1005.4 431.2L1001.8 436.4M1015.4 431.6L1011.8 436.9M1024.8 432.0L1021.2 437.4M1034.2 432.5L1030.6 437.8M1044.1 432.9L1040.5 438.3M1053.0 433.3L1049.4 438.7M1061.8 433.7L1058.2 439.2M1071.8 434.2L1068.2 439.7M1081.6 434.6L1078.0 440.1M1090.6 435.0L1087.0 440.6M1099.5 435.4L1095.9 441.0M1109.2 435.9L1105.6 441.5M1119.2 436.3L1115.6 442.0M1128.1 436.7L1124.5 442.4M1138.1 437.2L1134.5 442.9M1148.0 437.6L1144.4 443.4M1157.6 438.1L1154.0 443.9M1166.8 438.5L1163.2 444.3M1175.5 438.9L1171.9 444.8M1184.2 439.3L1180.6 445.2M1194.2 439.7L1190.6 445.7M1203.2 440.1L1199.6 446.1M1212.9 440.6L1209.3 446.6M1221.8 441.0L1218.2 447.0M1231.7 441.4L1228.1 447.5M1241.2 441.9L1237.6 448.0M1250.2 442.3L1246.6 448.4M1259.1 442.7L1255.5 448.8M1268.8 443.1L1265.2 449.3M1277.5 443.5L1273.9 449.8M1286.4 443.9L1282.8 450.2M1295.8 444.4L1292.2 450.7M1001.2 437.4L997.6 442.6M1010.2 437.8L1006.6 443.1M1020.2 438.3L1016.6 443.6M1029.1 438.7L1025.5 444.1M1037.8 439.2L1034.2 444.5M1046.8 439.6L1043.2 445.0M1056.0 440.1L1052.4 445.5M1064.7 440.5L1061.1 445.9M1073.6 440.9L1070.0 446.4M1082.7 441.4L1079.1 446.9M1092.2 441.8L1088.6 447.4M1101.0 442.3L1097.4 447.8M1110.1 442.7L1106.5 448.3M1120.1 443.2L1116.5 448.9M1130.1 443.7L1126.5 449.4M1139.7 444.2L1136.1 449.9M1149.4 444.6L1145.8 450.4M1158.8 445.1L1155.2 450.9M1167.7 445.5L1164.1 451.4M1176.3 446.0L1172.7 451.8M1184.9 446.4L1181.3 452.3M1194.9 446.9L1191.3 452.8M1204.5 447.4L1200.9 453.3M1214.6 447.8L1211.0 453.8M1223.2 448.3L1219.6 454.3M1232.8 448.7L1229.2 454.8M1242.1 449.2L1238.5 455.3M1251.8 449.7L1248.2 455.8M1260.9 450.1L1257.3 456.3M1271.0 450.6L1267.4 456.8M1279.7 451.0L1276.1 457.3M1289.1 451.5L1285.5 457.8M1298.8 452.0L1295.2 458.3M1006.0 444.0L1002.4 449.2M1015.6 444.5L1012.0 449.8M1025.4 445.1L1021.8 450.3M1035.4 445.6L1031.8 450.9M1044.5 446.1L1040.9 451.4M1054.1 446.6L1050.5 452.0M1064.1 447.1L1060.5 452.5M1074.0 447.6L1070.4 453.1M1083.2 448.1L1079.6 453.6M1093.0 448.6L1089.4 454.2M1102.9 449.1L1099.3 454.7M1112.4 449.6L1108.8 455.2M1121.9 450.1L1118.3 455.8M1131.1 450.6L1127.5 456.3M1140.6 451.1L1137.0 456.8M1150.1 451.6L1146.5 457.4M1158.8 452.1L1155.2 457.9M1168.3 452.6L1164.7 458.4M1178.4 453.1L1174.8 459.0M1188.4 453.6L1184.8 459.5M1198.1 454.2L1194.5 460.1M1207.2 454.6L1203.6 460.6M1216.9 455.1L1213.3 461.1M1226.4 455.6L1222.8 461.7M1235.7 456.1L1232.1 462.2M1245.5 456.7L1241.9 462.7M1254.3 457.1L1250.7 463.2M1264.0 457.6L1260.4 463.8M1272.6 458.1L1269.0 464.3M1282.1 458.6L1278.5 464.8M1291.4 459.1L1287.8 465.3M1001.4 450.2L997.8 455.4M1010.7 450.7L1007.1 455.9M1020.3 451.3L1016.7 456.5M1030.2 451.8L1026.6 457.1M1039.2 452.3L1035.6 457.6M1047.8 452.8L1044.2 458.2M1056.9 453.3L1053.3 458.7M1066.5 453.9L1062.9 459.3M1075.4 454.4L1071.8 459.8M1084.3 454.9L1080.7 460.3M1094.2 455.4L1090.6 460.9M1103.8 456.0L1100.2 461.5M1113.1 456.5L1109.5 462.1M1123.0 457.0L1119.4 462.7M1132.1 457.6L1128.5 463.2M1141.7 458.1L1138.1 463.8M1150.6 458.6L1147.0 464.3M1159.9 459.1L1156.3 464.9M1169.7 459.7L1166.1 465.5M1179.6 460.2L1176.0 466.1M1189.6 460.8L1186.0 466.7M1198.7 461.3L1195.1 467.2M1208.2 461.8L1204.6 467.8M1217.3 462.4L1213.7 468.3M1226.1 462.8L1222.5 468.9M1235.4 463.4L1231.8 469.4M1245.3 463.9L1241.7 470.0M1255.2 464.5L1251.6 470.6M1264.8 465.0L1261.2 471.2M1274.9 465.6L1271.3 471.8M1283.9 466.1L1280.3 472.3M1292.7 466.6L1289.1 472.8M1005.1 456.8L1001.5 462.0M1014.0 457.4L1010.4 462.6M1023.2 457.9L1019.6 463.2M1032.7 458.5L1029.1 463.8M1042.1 459.0L1038.5 464.4M1051.1 459.6L1047.5 464.9M1061.0 460.2L1057.4 465.6M1071.1 460.8L1067.5 466.2M1080.4 461.3L1076.8 466.8M1089.1 461.9L1085.5 467.3M1097.7 462.4L1094.1 467.9M1107.6 463.0L1104.0 468.5M1116.3 463.5L1112.7 469.1M1125.9 464.1L1122.3 469.7M1135.4 464.6L1131.8 470.3M1144.5 465.2L1140.9 470.9M1154.3 465.8L1150.7 471.5M1162.9 466.3L1159.3 472.0M1171.7 466.8L1168.1 472.6M1181.0 467.4L1177.4 473.2M1189.6 467.9L1186.0 473.7M1199.5 468.5L1195.9 474.4M1208.4 469.0L1204.8 474.9M1217.2 469.5L1213.6 475.5M1225.9 470.1L1222.3 476.0M1235.4 470.6L1231.8 476.7M1244.7 471.2L1241.1 477.2M1254.2 471.8L1250.6 477.8M1263.8 472.3L1260.2 478.5M1273.6 472.9L1270.0 479.1M1283.7 473.5L1280.1 479.7M1293.3 474.1L1289.7 480.3M1001.0 463.0L997.4 468.1M1009.8 463.5L1006.2 468.7M1018.4 464.1L1014.8 469.3M1027.7 464.7L1024.1 469.9M1037.4 465.3L1033.8 470.6M1046.3 465.9L1042.7 471.2M1055.3 466.4L1051.7 471.8M1064.4 467.0L1060.8 472.4M1074.1 467.6L1070.5 473.0M1083.4 468.2L1079.8 473.7M1093.0 468.8L1089.4 474.3M1102.7 469.4L1099.1 475.0M1111.9 470.0L1108.3 475.6M1121.7 470.6L1118.1 476.2M1131.6 471.3L1128.0 476.9M1140.4 471.8L1136.8 477.5M1150.4 472.5L1146.8 478.2M1160.0 473.1L1156.4 478.8M1168.8 473.6L1165.2 479.4M1178.1 474.2L1174.5 480.0M1187.7 474.8L1184.1 480.7M1197.6 475.5L1194.0 481.4M1206.8 476.1L1203.2 482.0M1216.2 476.7L1212.6 482.6M1226.2 477.3L1222.6 483.3M1236.0 477.9L1232.4 483.9M1246.0 478.6L1242.4 484.6M1255.3 479.1L1251.7 485.2M1264.8 479.8L1261.2 485.9M1273.8 480.3L1270.2 486.5M1283.4 480.9L1279.8 487.1M1293.3 481.6L1289.7 487.8M1005.9 469.7L1002.3 474.9M1014.9 470.3L1011.3 475.5M1024.8 471.0L1021.2 476.2M1034.9 471.7L1031.3 476.9M1044.9 472.3L1041.3 477.6M1054.3 473.0L1050.7 478.3M1064.1 473.6L1060.5 479.0M1073.2 474.2L1069.6 479.6M1083.2 474.9L1079.6 480.3M1093.1 475.6L1089.5 481.0M1102.2 476.2L1098.6 481.7M1110.9 476.8L1107.3 482.3M1120.2 477.4L1116.6 483.0M1129.6 478.0L1126.0 483.6M1139.3 478.7L1135.7 484.3M1148.7 479.3L1145.1 485.0M1157.3 479.9L1153.7 485.6M1167.1 480.5L1163.5 486.3M1175.8 481.1L1172.2 486.9M1185.6 481.8L1182.0 487.6M1194.5 482.4L1190.9 488.2M1203.6 483.0L1200.0 488.9M1213.4 483.7L1209.8 489.6M1222.2 484.2L1218.6 490.2M1231.0 484.8L1227.4 490.8M1240.4 485.5L1236.8 491.5M1250.1 486.1L1246.5 492.2M1259.9 486.8L1256.3 492.9M1269.6 487.4L1266.0 493.6M1279.6 488.1L1276.0 494.3M1288.9 488.7L1285.3 494.9M1298.9 489.4L1295.3 495.6M1000.4 475.7L996.8 480.9M1009.8 476.4L1006.2 481.6M1018.9 477.0L1015.3 482.2M1028.6 477.7L1025.0 483.0M1038.1 478.4L1034.5 483.7M1047.5 479.1L1043.9 484.4M1057.4 479.8L1053.8 485.1M1066.8 480.4L1063.2 485.8M1075.9 481.1L1072.3 486.5M1085.0 481.7L1081.4 487.2M1094.9 482.4L1091.3 487.9M1104.9 483.1L1101.3 488.6M1113.8 483.8L1110.2 489.3M1123.7 484.5L1120.1 490.0M1133.7 485.2L1130.1 490.8M1143.1 485.8L1139.5 491.5M1152.6 486.5L1149.0 492.2M1161.5 487.1L1157.9 492.9M1170.9 487.8L1167.3 493.6M1180.2 488.5L1176.6 494.3M1189.7 489.1L1186.1 495.0M1198.4 489.8L1194.8 495.6M1208.4 490.5L1204.8 496.4M1217.8 491.1L1214.2 497.1M1227.0 491.8L1223.4 497.7M1236.8 492.5L1233.2 498.5M1246.2 493.2L1242.6 499.2M1255.6 493.8L1252.0 499.9M1265.2 494.5L1261.6 500.6M1273.9 495.1L1270.3 501.2M1283.3 495.8L1279.7 501.9M1292.5 496.4L1288.9 502.6M1006.3 482.6L1002.7 487.7M1015.4 483.2L1011.8 488.4M1024.7 483.9L1021.1 489.1M1033.5 484.6L1029.9 489.8M1042.7 485.3L1039.1 490.6M1052.5 486.0L1048.9 491.3M1062.5 486.8L1058.9 492.1M1071.8 487.5L1068.2 492.8M1080.9 488.1L1077.3 493.5M1089.8 488.8L1086.2 494.2M1099.3 489.5L1095.7 495.0M1109.3 490.2L1105.7 495.8M1118.1 490.9L1114.5 496.4M1127.8 491.6L1124.2 497.2M1136.5 492.3L1132.9 497.9M1145.4 492.9L1141.8 498.6M1154.3 493.6L1150.7 499.3M1163.9 494.3L1160.3 500.0M1173.0 495.0L1169.4 500.7M1182.1 495.7L1178.5 501.5M1191.7 496.4L1188.1 502.2M1200.4 497.0L1196.8 502.9M1210.1 497.8L1206.5 503.6M1218.9 498.4L1215.3 504.3M1228.3 499.1L1224.7 505.1M1237.3 499.8L1233.7 505.8M1246.1 500.4L1242.5 506.5M1255.5 501.1L1251.9 507.2M1264.8 501.8L1261.2 507.9M1274.0 502.5L1270.4 508.6M1283.2 503.2L1279.6 509.3M1292.6 503.9L1289.0 510.1M1000.4 488.5L996.8 493.6M1010.0 489.3L1006.4 494.4M1019.5 490.0L1015.9 495.2M1028.9 490.8L1025.3 496.0M1038.8 491.5L1035.2 496.8M1048.3 492.3L1044.7 497.6M1058.2 493.0L1054.6 498.4M1067.1 493.7L1063.5 499.1M1076.8 494.5L1073.2 499.9M1086.7 495.3L1083.1 500.7M1096.6 496.1L1093.0 501.5M1105.7 496.8L1102.1 502.2M1114.8 497.5L1111.2 503.0M1124.7 498.2L1121.1 503.8M1133.7 498.9L1130.1 504.5M1143.8 499.7L1140.2 505.4M1153.7 500.5L1150.1 506.2M1162.5 501.2L1158.9 506.9M1171.5 501.9L1167.9 507.6M1181.2 502.7L1177.6 508.4M1190.1 503.4L1186.5 509.2M1198.9 504.0L1195.3 509.9M1208.7 504.8L1205.1 510.7M1218.0 505.5L1214.4 511.4M1227.8 506.3L1224.2 512.2M1236.5 507.0L1232.9 512.9M1245.7 507.7L1242.1 513.7M1255.4 508.5L1251.8 514.5M1264.0 509.1L1260.4 515.2M1272.9 509.8L1269.3 515.9M1282.5 510.6L1278.9 516.7M1292.5 511.4L1288.9 517.5M1004.7 495.3L1001.1 500.4M1014.1 496.1L1010.5 501.2M1023.8 496.8L1020.2 502.0M1033.2 497.6L1029.6 502.8M1042.8 498.4L1039.2 503.6M1051.7 499.1L1048.1 504.4M1060.4 499.8L1056.8 505.1M1069.2 500.6L1065.6 505.9M1077.8 501.3L1074.2 506.6M1087.2 502.0L1083.6 507.4M1096.6 502.8L1093.0 508.2M1106.1 503.6L1102.5 509.0M1114.9 504.3L1111.3 509.8M1123.8 505.0L1120.2 510.6M1132.7 505.7L1129.1 511.3M1142.5 506.6L1138.9 512.2M1152.6 507.4L1149.0 513.0M1162.6 508.2L1159.0 513.9M1171.3 508.9L1167.7 514.6M1180.0 509.6L1176.4 515.4M1190.1 510.4L1186.5 516.2M1199.4 511.2L1195.8 517.0M1209.1 512.0L1205.5 517.8M1218.2 512.7L1214.6 518.6M1227.5 513.5L1223.9 519.4M1236.9 514.3L1233.3 520.2M1246.1 515.0L1242.5 521.0M1255.6 515.8L1252.0 521.8M1264.2 516.5L1260.6 522.6M1273.9 517.3L1270.3 523.4M1283.8 518.1L1280.2 524.2M1292.6 518.8L1289.0 525.0M1001.5 501.4L997.9 506.5M1010.7 502.2L1007.1 507.3M1019.6 503.0L1016.0 508.1M1028.4 503.7L1024.8 508.9M1037.8 504.5L1034.2 509.7M1046.4 505.3L1042.8 510.5M1056.4 506.1L1052.8 511.4M1066.2 506.9L1062.6 512.3M1075.8 507.8L1072.2 513.1M1085.7 508.6L1082.1 514.0M1095.3 509.4L1091.7 514.9M1104.5 510.2L1100.9 515.7M1114.0 511.0L1110.4 516.5M1123.3 511.8L1119.7 517.4M1133.4 512.7L1129.8 518.3M1143.2 513.5L1139.6 519.1M1152.2 514.3L1148.6 519.9M1162.2 515.1L1158.6 520.8M1171.9 516.0L1168.3 521.7M1181.6 516.8L1178.0 522.5M1191.5 517.6L1187.9 523.4M1200.7 518.4L1197.1 524.2M1210.6 519.3L1207.0 525.1M1220.5 520.1L1216.9 526.0M1230.2 521.0L1226.6 526.9M1239.9 521.8L1236.3 527.7M1249.7 522.6L1246.1 528.6M1258.9 523.4L1255.3 529.4M1268.6 524.2L1265.0 530.3M1277.3 525.0L1273.7 531.1M1286.4 525.8L1282.8 531.9M1295.7 526.5L1292.1 532.7M1005.2 508.2L1001.6 513.2M1014.8 509.0L1011.2 514.1M1024.3 509.9L1020.7 515.0M1033.3 510.7L1029.7 515.8M1043.3 511.5L1039.7 516.8M1052.9 512.4L1049.3 517.7M1062.0 513.2L1058.4 518.5M1071.6 514.1L1068.0 519.4M1081.0 514.9L1077.4 520.3M1090.4 515.7L1086.8 521.1M1099.6 516.6L1096.0 522.0M1109.7 517.5L1106.1 522.9M1119.3 518.3L1115.7 523.8M1128.9 519.2L1125.3 524.7M1138.7 520.0L1135.1 525.6M1148.7 520.9L1145.1 526.5M1157.4 521.7L1153.8 527.3M1166.9 522.6L1163.3 528.2M1176.6 523.4L1173.0 529.1M1185.6 524.2L1182.0 530.0M1194.8 525.0L1191.2 530.8M1203.5 525.8L1199.9 531.6M1212.4 526.6L1208.8 532.4M1221.5 527.4L1217.9 533.3M1230.3 528.2L1226.7 534.1M1239.2 529.0L1235.6 534.9M1249.2 529.9L1245.6 535.9M1258.6 530.7L1255.0 536.7M1268.0 531.6L1264.4 537.6M1278.0 532.5L1274.4 538.5M1287.5 533.3L1283.9 539.4M1297.6 534.2L1294.0 540.3M1001.6 514.2L998.0 519.3M1010.3 515.1L1006.7 520.1M1019.8 515.9L1016.2 521.1M1029.6 516.8L1026.0 522.0M1038.2 517.6L1034.6 522.8M1048.2 518.6L1044.6 523.8M1057.1 519.4L1053.5 524.6M1066.4 520.2L1062.8 525.5M1075.2 521.1L1071.6 526.4M1084.6 521.9L1081.0 527.3M1094.1 522.8L1090.5 528.2M1102.8 523.6L1099.2 529.0M1112.8 524.5L1109.2 530.0M1122.0 525.4L1118.4 530.9M1131.4 526.3L1127.8 531.8M1140.9 527.2L1137.3 532.7M1150.1 528.0L1146.5 533.6M1159.1 528.8L1155.5 534.5M1168.7 529.7L1165.1 535.4M1178.1 530.6L1174.5 536.3M1187.1 531.4L1183.5 537.2M1196.8 532.3L1193.2 538.1M1205.9 533.2L1202.3 539.0M1214.5 534.0L1210.9 539.8M1223.4 534.8L1219.8 540.7M1232.1 535.6L1228.5 541.5M1240.9 536.4L1237.3 542.3M1250.7 537.3L1247.1 543.3M1259.9 538.2L1256.3 544.2M1269.8 539.1L1266.2 545.1M1279.5 540.0L1275.9 546.1M1288.2 540.8L1284.6 546.9M1298.3 541.7L1294.7 547.9M1004.6 520.9L1001.0 526.0M1014.6 521.9L1011.0 527.0M1023.8 522.8L1020.2 527.9M1033.2 523.7L1029.6 528.8M1043.2 524.7L1039.6 529.8M1052.2 525.5L1048.6 530.7M1061.6 526.4L1058.0 531.7M1071.6 527.4L1068.0 532.7M1081.3 528.3L1077.7 533.7M1090.6 529.2L1087.0 534.6M1100.6 530.2L1097.0 535.6M1110.5 531.1L1106.9 536.6M1120.0 532.0L1116.4 537.5M1128.7 532.9L1125.1 538.4M1138.3 533.8L1134.7 539.3M1147.6 534.7L1144.0 540.3M1156.5 535.6L1152.9 541.2M1165.1 536.4L1161.5 542.0M1174.5 537.3L1170.9 543.0M1183.3 538.1L1179.7 543.9M1192.6 539.0L1189.0 544.8M1202.2 540.0L1198.6 545.7M1211.5 540.9L1207.9 546.7M1220.5 541.7L1216.9 547.6M1229.9 542.6L1226.3 548.5M1239.2 543.5L1235.6 549.4M1248.9 544.5L1245.3 550.4M1258.3 545.4L1254.7 551.3M1268.4 546.3L1264.8 552.4M1278.5 547.3L1274.9 553.4M1288.2 548.2L1284.6 554.3M1297.1 549.1L1293.5 555.2M1001.8 527.1L998.2 532.1M1011.6 528.0L1008.0 533.1M1021.1 529.0L1017.5 534.1M1030.2 529.9L1026.6 535.0M1039.2 530.8L1035.6 536.0M1048.9 531.8L1045.3 537.0M1058.3 532.7L1054.7 538.0M1067.8 533.7L1064.2 538.9M1077.4 534.6L1073.8 539.9M1087.1 535.6L1083.5 540.9M1096.0 536.5L1092.4 541.9M1104.9 537.4L1101.3 542.8M1115.0 538.4L1111.4 543.8M1125.0 539.4L1121.4 544.9M1134.9 540.4L1131.3 545.9M1143.6 541.2L1140.0 546.8M1152.3 542.1L1148.7 547.7M1161.3 543.0L1157.7 548.6M1170.5 543.9L1166.9 549.6M1180.0 544.9L1176.4 550.6M1188.8 545.8L1185.2 551.5M1198.2 546.7L1194.6 552.4M1206.9 547.6L1203.3 553.3M1215.6 548.4L1212.0 554.2M1225.3 549.4L1221.7 555.2M1234.7 550.3L1231.1 556.2M1244.2 551.3L1240.6 557.2M1253.4 552.2L1249.8 558.2M1262.7 553.1L1259.1 559.1M1271.6 554.0L1268.0 560.0M1280.7 554.9L1277.1 561.0M1290.5 555.9L1286.9 562.0M1004.6 533.8L1001.0 538.8M1013.4 534.7L1009.8 539.7M1023.2 535.7L1019.6 540.8M1032.8 536.7L1029.2 541.8M1042.5 537.7L1038.9 542.9M1051.5 538.6L1047.9 543.8M1060.7 539.6L1057.1 544.8M1069.7 540.5L1066.1 545.8M1079.5 541.5L1075.9 546.8M1088.6 542.5L1085.0 547.8M1098.2 543.5L1094.6 548.8M1108.3 544.5L1104.7 549.9M1117.4 545.4L1113.8 550.9M1126.8 546.4L1123.2 551.9M1136.5 547.4L1132.9 552.9M1146.5 548.5L1142.9 554.0M1155.8 549.4L1152.2 555.0M1164.9 550.4L1161.3 556.0M1173.7 551.3L1170.1 556.9M1183.6 552.3L1180.0 558.0M1192.3 553.2L1188.7 558.9M1201.0 554.1L1197.4 559.8M1210.5 555.1L1206.9 560.9M1219.8 556.1L1216.2 561.9M1229.4 557.0L1225.8 562.9M1238.5 558.0L1234.9 563.9M1248.2 559.0L1244.6 564.9M1256.9 559.9L1253.3 565.8M1265.9 560.8L1262.3 566.8M1275.5 561.8L1271.9 567.8M1284.2 562.7L1280.6 568.8M1293.2 563.7L1289.6 569.7M1001.4 539.8L997.8 544.8M1010.4 540.8L1006.8 545.8M1019.2 541.7L1015.6 546.8M1028.4 542.7L1024.8 547.8M1038.1 543.8L1034.5 548.9M1047.2 544.7L1043.6 549.9M1056.0 545.7L1052.4 550.9M1065.6 546.7L1062.0 552.0M1075.1 547.7L1071.5 553.0M1085.1 548.8L1081.5 554.1M1095.1 549.9L1091.5 555.2M1105.1 550.9L1101.5 556.3M1114.3 551.9L1110.7 557.4M1124.1 553.0L1120.5 558.4M1133.2 554.0L1129.6 559.4M1142.2 554.9L1138.6 560.5M1151.4 555.9L1147.8 561.5M1161.5 557.0L1157.9 562.6M1171.4 558.1L1167.8 563.7M1180.4 559.0L1176.8 564.7M1189.5 560.0L1185.9 565.7M1198.7 561.0L1195.1 566.7M1207.8 562.0L1204.2 567.7M1217.0 562.9L1213.4 568.7M1226.2 563.9L1222.6 569.8M1235.1 564.9L1231.5 570.7M1244.5 565.9L1240.9 571.8M1254.3 566.9L1250.7 572.9M1263.7 568.0L1260.1 573.9M1273.6 569.0L1270.0 575.0M1283.0 570.0L1279.4 576.1M1291.9 571.0L1288.3 577.0M1006.3 546.8L1002.7 551.8M1015.3 547.8L1011.7 552.8M1023.9 548.7L1020.3 553.8M1033.3 549.8L1029.7 554.9M1042.7 550.8L1039.1 556.0M1052.2 551.9L1048.6 557.0M1062.2 553.0L1058.6 558.2M1071.8 554.0L1068.2 559.3M1081.6 555.1L1078.0 560.4M1090.3 556.1L1086.7 561.4M1099.7 557.1L1096.1 562.5M1109.5 558.2L1105.9 563.6M1118.2 559.2L1114.6 564.6M1126.9 560.2L1123.3 565.6M1136.6 561.2L1133.0 566.7M1146.6 562.3L1143.0 567.9M1155.3 563.3L1151.7 568.8M1164.9 564.4L1161.3 569.9M1173.7 565.3L1170.1 571.0M1183.4 566.4L1179.8 572.1M1193.0 567.5L1189.4 573.2M1201.9 568.5L1198.3 574.2M1210.9 569.5L1207.3 575.2M1220.6 570.5L1217.0 576.3M1230.0 571.6L1226.4 577.4M1239.8 572.7L1236.2 578.5M1248.9 573.7L1245.3 579.6M1258.1 574.7L1254.5 580.6M1268.1 575.8L1264.5 581.8M1277.7 576.9L1274.1 582.9M1287.1 577.9L1283.5 583.9M1296.5 578.9L1292.9 585.0" stroke="#3f3f3a" stroke-width="1.5" fill="none"/>
</g>
<polygon points="1095,421 1119.8,415 1289,420.7 1203.7,575.8 1009.4,555.3" fill="none" stroke="#17170f" stroke-width="1.8" stroke-linejoin="round"/>
<polygon points="1096,421.5 1119.8,416 1128,419 1118,470 1098,520 1079,561.5 1011,555" fill="#33332f" opacity="0.55"/>
<polyline points="1287,424 1204.5,574.5" fill="none" stroke="#8a4e28" stroke-width="3.2" stroke-linejoin="round" stroke-linecap="round"/>
<polyline points="1289,420.7 1203.7,575.8" fill="none" stroke="#17170f" stroke-width="1.3" stroke-linejoin="round" stroke-linecap="round"/>
<polygon points="1009.4,555.3 1203.7,574.8 1201,582.4 1009.4,561.5" fill="#9b6944" stroke="#17170f" stroke-width="1.5" stroke-linejoin="round"/>
<polygon points="1022.2,330.2 1104.8,395.3 1011.6,399.7" fill="#57564f" stroke="#17170f" stroke-width="1.5" stroke-linejoin="round"/>
<polygon points="1022.2,330.2 1104.8,395.3 1011.6,399.7" fill="url(#stripes)" opacity="0.35"/>
<polygon points="1011.6,399.7 1104.8,395.3 1119.5,414.6 1108,402 1011.6,406" fill="#9b6944" stroke="#17170f" stroke-width="1.3" stroke-linejoin="round"/>
<polygon points="1085.5,402.5 1105.5,401.5 1105.5,418 1085.5,418.5" fill="#9a6836" stroke="#17170f" stroke-width="1.2" stroke-linejoin="round"/>
<polygon points="1105.5,401.5 1112,403 1118.5,415.5 1105.5,418" fill="#7c4a22" stroke="#17170f" stroke-width="1.2" stroke-linejoin="round"/>
<clipPath id="cpm"><polygon points="554,483 641,388.6 719.3,333.2 1022.2,330.2 1011.6,399.7 927.7,518.3"/></clipPath>
<g clip-path="url(#cpm)">
<rect x="540" y="320" width="500" height="210" fill="#605f57"/>
<path d="M540 340.9L1040 337.4M540 346.2L1040 344.8M540 351.6L1040 352.2M540 356.9L1040 359.6M540 362.2L1040 366.9M540 367.6L1040 374.3M540 372.9L1040 381.7M540 378.2L1040 389.1M540 383.6L1040 396.5M540 388.9L1040 403.9M540 394.3L1040 411.3M540 399.6L1040 418.7M540 404.9L1040 426.1M540 410.3L1040 433.4M540 415.6L1040 440.8M540 420.9L1040 448.2M540 426.3L1040 455.6M540 431.6L1040 463.0M540 436.9L1040 470.4M540 442.3L1040 477.8M540 447.6L1040 485.2M540 453.0L1040 492.6M540 458.3L1040 499.9M540 463.6L1040 507.3M540 469.0L1040 514.7M540 474.3L1040 522.1" stroke="#43433e" stroke-width="2.6" fill="none"/>
<path d="M540 343.5L1040 340.3M540 348.8L1040 347.7M540 354.2L1040 355.1M540 359.5L1040 362.5M540 364.8L1040 369.8M540 370.2L1040 377.2M540 375.5L1040 384.6M540 380.8L1040 392.0M540 386.2L1040 399.4M540 391.5L1040 406.8M540 396.9L1040 414.2M540 402.2L1040 421.6M540 407.5L1040 429.0M540 412.9L1040 436.3M540 418.2L1040 443.7M540 423.5L1040 451.1M540 428.9L1040 458.5M540 434.2L1040 465.9M540 439.5L1040 473.3M540 444.9L1040 480.7M540 450.2L1040 488.1M540 455.6L1040 495.5M540 460.9L1040 502.8M540 466.2L1040 510.2M540 471.6L1040 517.6M540 476.9L1040 525.0" stroke="#6c6b65" stroke-width="1.5" fill="none"/>
<path d="M781.6 340.2L779.4 345.5M831.0 339.9L828.8 345.4M861.1 339.6L858.9 345.3M880.7 339.5L878.5 345.2M891.4 339.4L889.2 345.2M941.8 339.1L939.6 345.1M950.6 339.0L948.4 345.0M961.5 338.9L959.3 345.0M971.6 338.9L969.4 345.0M981.3 338.8L979.1 345.0M990.7 338.7L988.5 344.9M820.9 346.4L818.7 351.9M840.3 346.4L838.1 351.9M899.2 346.2L897.0 352.0M916.5 346.1L914.3 352.0M926.0 346.1L923.8 352.0M934.9 346.1L932.7 352.0M945.5 346.1L943.3 352.1M965.9 346.0L963.7 352.1M975.7 346.0L973.5 352.1M985.7 345.9L983.5 352.1M1005.5 345.9L1003.3 352.1M1015.8 345.8L1013.6 352.1M764.9 352.8L762.7 358.1M793.1 352.9L790.9 358.2M832.2 352.9L830.0 358.4M861.5 353.0L859.3 358.6M870.9 353.0L868.7 358.6M889.6 353.0L887.4 358.7M900.0 353.0L897.8 358.8M919.2 353.0L917.0 358.9M929.7 353.0L927.5 359.0M938.7 353.0L936.5 359.0M948.9 353.1L946.7 359.1M958.2 353.1L956.0 359.1M968.8 353.1L966.6 359.2M979.5 353.1L977.3 359.2M988.8 353.1L986.6 359.3M999.5 353.1L997.3 359.3M1008.6 353.1L1006.4 359.4M1018.4 353.1L1016.2 359.4M1028.9 353.2L1026.7 359.5M782.0 359.2L779.8 364.5M828.3 359.4L826.1 364.9M890.5 359.8L888.3 365.5M899.8 359.8L897.6 365.6M957.3 360.1L955.1 366.1M967.6 360.2L965.4 366.2M976.9 360.2L974.7 366.3M986.7 360.3L984.5 366.4M997.5 360.3L995.3 366.5M1006.9 360.4L1004.7 366.6M1017.5 360.4L1015.3 366.7M1028.0 360.5L1025.8 366.8M795.1 365.6L792.9 371.0M843.0 366.1L840.8 371.6M851.6 366.2L849.4 371.8M860.4 366.3L858.2 371.9M889.4 366.5L887.2 372.3M908.7 366.7L906.5 372.5M917.7 366.8L915.5 372.7M926.5 366.9L924.3 372.8M936.8 367.0L934.6 372.9M945.5 367.1L943.3 373.0M954.9 367.1L952.7 373.2M965.4 367.2L963.2 373.3M975.9 367.3L973.7 373.4M985.5 367.4L983.3 373.6M995.2 367.5L993.0 373.7M1004.7 367.6L1002.5 373.8M1014.4 367.7L1012.2 374.0M1024.2 367.8L1022.0 374.1M804.1 372.1L801.9 377.5M845.4 372.7L843.2 378.3M855.4 372.8L853.2 378.4M872.9 373.1L870.7 378.7M890.6 373.3L888.4 379.1M901.2 373.5L899.0 379.2M970.3 374.4L968.1 380.5M979.6 374.5L977.4 380.6M990.2 374.7L988.0 380.8M999.1 374.8L996.9 381.0M1009.2 374.9L1007.0 381.1M1018.6 375.0L1016.4 381.3M1028.1 375.2L1025.9 381.5M822.9 378.9L820.7 384.3M861.0 379.6L858.8 385.2M879.3 379.9L877.1 385.6M918.3 380.6L916.1 386.4M927.3 380.7L925.1 386.6M937.0 380.9L934.8 386.8M945.9 381.1L943.7 387.0M973.8 381.6L971.6 387.6M994.0 381.9L991.8 388.1M1003.7 382.1L1001.5 388.3M1014.4 382.3L1012.2 388.5M801.5 384.9L799.3 390.3M822.5 385.4L820.3 390.8M851.5 386.0L849.3 391.6M862.0 386.2L859.8 391.8M881.6 386.7L879.4 392.4M891.0 386.9L888.8 392.6M900.7 387.1L898.5 392.8M920.1 387.5L917.9 393.3M928.9 387.7L926.7 393.6M939.1 387.9L936.9 393.8M978.4 388.8L976.2 394.9M988.6 389.0L986.4 395.1M999.1 389.2L996.9 395.4M1019.6 389.7L1017.4 395.9M1028.4 389.9L1026.2 396.1M805.6 391.4L803.4 396.8M816.4 391.7L814.2 397.1M855.1 392.7L852.9 398.3M884.5 393.5L882.3 399.2M893.7 393.7L891.5 399.4M904.4 394.0L902.2 399.8M914.1 394.2L911.9 400.1M924.6 394.5L922.4 400.4M933.9 394.8L931.7 400.6M961.9 395.5L959.7 401.5M970.7 395.7L968.5 401.7M981.1 396.0L978.9 402.1M990.1 396.2L987.9 402.3M999.6 396.5L997.4 402.6M1010.2 396.7L1008.0 402.9M1020.1 397.0L1017.9 403.2M1029.6 397.2L1027.4 403.5M853.2 399.3L851.0 404.8M883.0 400.2L880.8 405.9M892.8 400.5L890.6 406.2M912.2 401.1L910.0 406.9M942.0 402.0L939.8 407.9M951.4 402.2L949.2 408.2M960.1 402.5L957.9 408.5M970.9 402.8L968.7 408.9M981.6 403.1L979.4 409.2M1010.7 404.0L1008.5 410.2M1020.0 404.3L1017.8 410.5M786.9 403.7L784.7 408.9M863.2 406.3L861.0 411.8M882.6 406.9L880.4 412.6M891.1 407.2L888.9 412.9M901.6 407.6L899.4 413.3M911.3 407.9L909.1 413.7M920.3 408.2L918.1 414.0M929.8 408.5L927.6 414.4M938.4 408.8L936.2 414.7M947.3 409.1L945.1 415.0M955.9 409.4L953.7 415.4M965.5 409.7L963.3 415.7M975.8 410.1L973.6 416.1M985.3 410.4L983.1 416.5M1002.9 411.0L1000.7 417.2M1012.6 411.3L1010.4 417.5M1022.7 411.7L1020.5 417.9M836.0 411.9L833.8 417.3M844.7 412.2L842.5 417.7M853.3 412.5L851.1 418.1M901.5 414.4L899.3 420.1M920.2 415.1L918.0 420.9M930.9 415.5L928.7 421.4M940.3 415.9L938.1 421.8M989.1 417.7L986.9 423.8M998.2 418.1L996.0 424.2M1007.9 418.4L1005.7 424.6M1016.8 418.8L1014.6 425.0M1026.8 419.2L1024.6 425.4M774.7 415.8L772.5 421.0M794.5 416.7L792.3 422.0M864.0 419.6L861.8 425.2M874.0 420.0L871.8 425.6M891.8 420.8L889.6 426.5M910.6 421.6L908.4 427.3M928.7 422.4L926.5 428.2M958.1 423.6L955.9 429.5M967.1 424.0L964.9 430.0M977.6 424.4L975.4 430.5M1003.9 425.5L1001.7 431.7M1013.0 425.9L1010.8 432.1M1023.0 426.3L1020.8 432.6M833.7 424.9L831.5 430.3M863.1 426.2L860.9 431.8M881.9 427.1L879.7 432.7M890.6 427.5L888.4 433.2M931.6 429.4L929.4 435.3M981.9 431.8L979.7 437.8M992.8 432.3L990.6 438.3M1001.5 432.7L999.3 438.8M1010.7 433.1L1008.5 439.2M1020.8 433.6L1018.6 439.8M800.5 429.7L798.3 435.0M840.0 431.7L837.8 437.2M897.7 434.7L895.5 440.3M908.2 435.2L906.0 440.9M917.0 435.6L914.8 441.4M926.9 436.1L924.7 441.9M935.5 436.6L933.3 442.4M945.9 437.1L943.7 443.0M967.8 438.2L965.6 444.2M976.8 438.6L974.6 444.7M986.4 439.1L984.2 445.2M995.0 439.6L992.8 445.6M1003.7 440.0L1001.5 446.1M1012.8 440.5L1010.6 446.6M1022.4 440.9L1020.2 447.1M823.7 437.4L821.5 442.8M873.4 440.1L871.2 445.7M883.2 440.7L881.0 446.3M912.7 442.3L910.5 448.0M940.9 443.8L938.7 449.7M950.7 444.3L948.5 450.2M972.1 445.5L969.9 451.5M980.7 446.0L978.5 452.0M990.6 446.5L988.4 452.6M999.8 447.0L997.6 453.1M1010.5 447.6L1008.3 453.8M1020.7 448.2L1018.5 454.4M837.1 444.7L834.9 450.1M854.9 445.8L852.7 451.2M863.9 446.3L861.7 451.8M894.9 448.1L892.7 453.8M912.8 449.1L910.6 454.9M922.5 449.7L920.3 455.5M932.3 450.3L930.1 456.1M969.4 452.5L967.2 458.4M978.3 453.0L976.1 459.0M988.7 453.6L986.5 459.6M997.6 454.1L995.4 460.2M1008.3 454.8L1006.1 460.9M1019.2 455.4L1017.0 461.6M1028.7 455.9L1026.5 462.2M797.3 448.8L795.1 454.0M847.5 451.9L845.3 457.4M856.1 452.5L853.9 457.9M886.2 454.3L884.0 460.0M935.5 457.4L933.3 463.2M944.6 458.0L942.4 463.9M971.6 459.7L969.4 465.7M982.2 460.4L980.0 466.4M993.2 461.1L991.0 467.1M1003.0 461.7L1000.8 467.8M1011.8 462.2L1009.6 468.4M1021.4 462.8L1019.2 469.0M821.7 456.8L819.5 462.1M898.8 461.9L896.6 467.6M936.9 464.5L934.7 470.3M966.6 466.5L964.4 472.4M975.9 467.1L973.7 473.1M985.4 467.7L983.2 473.7M1005.5 469.1L1003.3 475.2M1014.5 469.7L1012.3 475.8M1024.5 470.4L1022.3 476.5M841.8 464.7L839.6 470.1M860.7 466.1L858.5 471.5M869.3 466.7L867.1 472.2M886.8 467.9L884.6 473.5M896.3 468.6L894.1 474.2M916.0 470.0L913.8 475.7M935.0 471.3L932.8 477.1M955.6 472.8L953.4 478.7M964.1 473.4L961.9 479.3M984.2 474.8L982.0 480.8M993.7 475.5L991.5 481.5M1004.5 476.3L1002.3 482.3M1013.9 476.9L1011.7 483.0M1024.0 477.6L1021.8 483.8M813.7 469.2L811.5 474.5M871.9 473.5L869.7 479.1M881.5 474.3L879.3 479.8M910.4 476.4L908.2 482.1M921.2 477.2L919.0 483.0M930.2 477.9L928.0 483.7M938.8 478.6L936.6 484.4M958.8 480.1L956.6 486.0M968.3 480.8L966.1 486.7M977.3 481.5L975.1 487.4M986.4 482.1L984.2 488.1M995.8 482.8L993.6 488.9M1004.8 483.5L1002.6 489.6M1014.7 484.3L1012.5 490.4M1025.0 485.0L1022.8 491.2M825.0 476.5L822.8 481.9M855.8 479.0L853.6 484.4M895.0 482.1L892.8 487.7M914.5 483.6L912.3 489.3M925.2 484.5L923.0 490.2M934.9 485.2L932.7 491.0M945.5 486.1L943.3 491.9M964.1 487.5L961.9 493.4M995.3 490.0L993.1 496.0M1004.5 490.7L1002.3 496.8M1014.7 491.6L1012.5 497.7M1024.1 492.3L1021.9 498.4M818.1 482.5L815.9 487.7M844.6 484.7L842.4 490.1M874.7 487.2L872.5 492.7M883.8 487.9L881.6 493.5M894.7 488.8L892.5 494.4M905.6 489.7L903.4 495.4M915.2 490.5L913.0 496.2M926.1 491.5L923.9 497.2M936.0 492.3L933.8 498.0M945.0 493.0L942.8 498.8M975.0 495.5L972.8 501.5M985.4 496.4L983.2 502.4M1004.4 498.0L1002.2 504.0M1013.3 498.7L1011.1 504.8M1022.5 499.5L1020.3 505.6M814.9 488.7L812.7 493.9M825.0 489.5L822.8 494.8M856.6 492.3L854.4 497.7M884.6 494.7L882.4 500.3M914.1 497.3L911.9 503.0M924.3 498.2L922.1 503.9M933.2 499.0L931.0 504.7M952.1 500.6L949.9 506.5M970.3 502.2L968.1 508.1M981.3 503.2L979.1 509.1M990.4 504.0L988.2 510.0M998.9 504.7L996.7 510.8M1009.2 505.6L1007.0 511.7M1017.7 506.4L1015.5 512.5M845.2 497.9L843.0 503.3M853.8 498.7L851.6 504.1M863.1 499.5L860.9 505.0M873.0 500.4L870.8 505.9M903.4 503.2L901.2 508.8M912.7 504.1L910.5 509.7M923.2 505.0L921.0 510.7M941.9 506.7L939.7 512.5M951.5 507.6L949.3 513.4M962.5 508.6L960.3 514.5M980.7 510.3L978.5 516.2M990.4 511.2L988.2 517.2M1001.2 512.2L999.0 518.2M1009.7 513.0L1007.5 519.0M1018.2 513.7L1016.0 519.8M1028.9 514.7L1026.7 520.8" stroke="#44443f" stroke-width="1.1" fill="none" opacity="0.8"/>
<rect x="862" y="469" width="10" height="2.2" fill="#7a7972" opacity="0.53"/><rect x="911" y="501" width="5" height="2.2" fill="#7a7972" opacity="0.39"/><rect x="996" y="452" width="10" height="2.2" fill="#7a7972" opacity="0.28"/><rect x="797" y="379" width="8" height="2.2" fill="#7a7972" opacity="0.42"/><rect x="606" y="374" width="7" height="2.2" fill="#7a7972" opacity="0.52"/><rect x="922" y="364" width="10" height="2.2" fill="#7a7972" opacity="0.29"/><rect x="859" y="358" width="5" height="2.2" fill="#7a7972" opacity="0.51"/><rect x="688" y="374" width="11" height="2.2" fill="#7a7972" opacity="0.51"/><rect x="722" y="508" width="8" height="2.2" fill="#7a7972" opacity="0.45"/><rect x="686" y="504" width="9" height="2.2" fill="#7a7972" opacity="0.54"/><rect x="975" y="389" width="7" height="2.2" fill="#7a7972" opacity="0.30"/><rect x="661" y="347" width="7" height="2.2" fill="#7a7972" opacity="0.43"/><rect x="601" y="457" width="7" height="2.2" fill="#7a7972" opacity="0.34"/><rect x="944" y="422" width="7" height="2.2" fill="#7a7972" opacity="0.39"/><rect x="896" y="345" width="11" height="2.2" fill="#7a7972" opacity="0.26"/><rect x="915" y="487" width="5" height="2.2" fill="#7a7972" opacity="0.49"/><rect x="754" y="439" width="5" height="2.2" fill="#7a7972" opacity="0.26"/><rect x="676" y="507" width="6" height="2.2" fill="#7a7972" opacity="0.48"/><rect x="990" y="505" width="7" height="2.2" fill="#7a7972" opacity="0.36"/><rect x="820" y="475" width="6" height="2.2" fill="#7a7972" opacity="0.47"/><rect x="935" y="490" width="5" height="2.2" fill="#7a7972" opacity="0.53"/><rect x="638" y="396" width="9" height="2.2" fill="#7a7972" opacity="0.53"/><rect x="743" y="501" width="8" height="2.2" fill="#7a7972" opacity="0.34"/><rect x="733" y="367" width="5" height="2.2" fill="#7a7972" opacity="0.29"/><rect x="889" y="514" width="6" height="2.2" fill="#7a7972" opacity="0.26"/><rect x="1014" y="431" width="7" height="2.2" fill="#7a7972" opacity="0.32"/><rect x="849" y="484" width="8" height="2.2" fill="#7a7972" opacity="0.38"/><rect x="623" y="500" width="5" height="2.2" fill="#7a7972" opacity="0.40"/><rect x="952" y="359" width="9" height="2.2" fill="#7a7972" opacity="0.53"/><rect x="865" y="477" width="6" height="2.2" fill="#7a7972" opacity="0.38"/><rect x="663" y="487" width="7" height="2.2" fill="#7a7972" opacity="0.39"/><rect x="1020" y="488" width="11" height="2.2" fill="#7a7972" opacity="0.39"/><rect x="805" y="466" width="8" height="2.2" fill="#7a7972" opacity="0.34"/><rect x="770" y="361" width="7" height="2.2" fill="#7a7972" opacity="0.55"/><rect x="1003" y="448" width="8" height="2.2" fill="#7a7972" opacity="0.35"/><rect x="637" y="384" width="10" height="2.2" fill="#7a7972" opacity="0.51"/><rect x="752" y="476" width="10" height="2.2" fill="#7a7972" opacity="0.46"/><rect x="879" y="472" width="7" height="2.2" fill="#7a7972" opacity="0.46"/><rect x="718" y="422" width="10" height="2.2" fill="#7a7972" opacity="0.46"/><rect x="723" y="505" width="9" height="2.2" fill="#7a7972" opacity="0.42"/><rect x="605" y="433" width="7" height="2.2" fill="#7a7972" opacity="0.45"/><rect x="794" y="482" width="9" height="2.2" fill="#7a7972" opacity="0.49"/><rect x="746" y="451" width="9" height="2.2" fill="#7a7972" opacity="0.50"/><rect x="747" y="487" width="10" height="2.2" fill="#7a7972" opacity="0.46"/><rect x="1010" y="507" width="8" height="2.2" fill="#7a7972" opacity="0.41"/><rect x="670" y="486" width="11" height="2.2" fill="#7a7972" opacity="0.39"/><rect x="890" y="465" width="9" height="2.2" fill="#7a7972" opacity="0.30"/><rect x="928" y="440" width="9" height="2.2" fill="#7a7972" opacity="0.38"/><rect x="862" y="474" width="9" height="2.2" fill="#7a7972" opacity="0.47"/><rect x="612" y="364" width="8" height="2.2" fill="#7a7972" opacity="0.45"/><rect x="692" y="458" width="9" height="2.2" fill="#7a7972" opacity="0.26"/><rect x="798" y="376" width="5" height="2.2" fill="#7a7972" opacity="0.29"/><rect x="733" y="368" width="6" height="2.2" fill="#7a7972" opacity="0.26"/><rect x="795" y="403" width="9" height="2.2" fill="#7a7972" opacity="0.43"/><rect x="700" y="498" width="5" height="2.2" fill="#7a7972" opacity="0.37"/><rect x="717" y="409" width="6" height="2.2" fill="#7a7972" opacity="0.50"/><rect x="757" y="341" width="9" height="2.2" fill="#7a7972" opacity="0.28"/><rect x="829" y="396" width="8" height="2.2" fill="#7a7972" opacity="0.54"/><rect x="944" y="410" width="10" height="2.2" fill="#7a7972" opacity="0.44"/><rect x="755" y="361" width="9" height="2.2" fill="#7a7972" opacity="0.42"/><rect x="1002" y="509" width="9" height="2.2" fill="#7a7972" opacity="0.36"/><rect x="975" y="335" width="6" height="2.2" fill="#7a7972" opacity="0.42"/><rect x="858" y="360" width="9" height="2.2" fill="#7a7972" opacity="0.52"/><rect x="758" y="413" width="6" height="2.2" fill="#7a7972" opacity="0.34"/><rect x="1008" y="403" width="11" height="2.2" fill="#7a7972" opacity="0.52"/><rect x="850" y="382" width="11" height="2.2" fill="#7a7972" opacity="0.40"/><rect x="775" y="392" width="11" height="2.2" fill="#7a7972" opacity="0.40"/><rect x="720" y="421" width="6" height="2.2" fill="#7a7972" opacity="0.44"/><rect x="786" y="388" width="10" height="2.2" fill="#7a7972" opacity="0.50"/><rect x="606" y="431" width="7" height="2.2" fill="#7a7972" opacity="0.53"/><rect x="928" y="379" width="7" height="2.2" fill="#7a7972" opacity="0.30"/><rect x="1015" y="388" width="9" height="2.2" fill="#7a7972" opacity="0.39"/><rect x="871" y="444" width="9" height="2.2" fill="#7a7972" opacity="0.29"/><rect x="919" y="389" width="8" height="2.2" fill="#7a7972" opacity="0.35"/><rect x="725" y="430" width="8" height="2.2" fill="#7a7972" opacity="0.36"/><rect x="913" y="441" width="5" height="2.2" fill="#7a7972" opacity="0.33"/><rect x="791" y="500" width="10" height="2.2" fill="#7a7972" opacity="0.41"/><rect x="606" y="475" width="8" height="2.2" fill="#7a7972" opacity="0.42"/><rect x="897" y="449" width="8" height="2.2" fill="#7a7972" opacity="0.52"/><rect x="762" y="406" width="10" height="2.2" fill="#7a7972" opacity="0.31"/><rect x="725" y="484" width="5" height="2.2" fill="#7a7972" opacity="0.50"/><rect x="892" y="413" width="7" height="2.2" fill="#7a7972" opacity="0.48"/><rect x="982" y="361" width="8" height="2.2" fill="#7a7972" opacity="0.41"/><rect x="809" y="395" width="6" height="2.2" fill="#7a7972" opacity="0.43"/><rect x="941" y="347" width="6" height="2.2" fill="#7a7972" opacity="0.50"/><rect x="933" y="454" width="5" height="2.2" fill="#7a7972" opacity="0.47"/><rect x="1011" y="515" width="9" height="2.2" fill="#7a7972" opacity="0.26"/><rect x="954" y="374" width="9" height="2.2" fill="#7a7972" opacity="0.54"/><rect x="899" y="359" width="7" height="2.2" fill="#7a7972" opacity="0.53"/><rect x="663" y="445" width="7" height="2.2" fill="#7a7972" opacity="0.30"/><rect x="861" y="343" width="6" height="2.2" fill="#7a7972" opacity="0.36"/><rect x="630" y="345" width="8" height="2.2" fill="#7a7972" opacity="0.47"/><rect x="969" y="359" width="8" height="2.2" fill="#7a7972" opacity="0.34"/><rect x="852" y="423" width="11" height="2.2" fill="#7a7972" opacity="0.36"/><rect x="623" y="461" width="6" height="2.2" fill="#7a7972" opacity="0.44"/><rect x="812" y="499" width="8" height="2.2" fill="#7a7972" opacity="0.44"/><rect x="711" y="434" width="7" height="2.2" fill="#7a7972" opacity="0.48"/><rect x="817" y="359" width="6" height="2.2" fill="#7a7972" opacity="0.36"/><rect x="909" y="367" width="9" height="2.2" fill="#7a7972" opacity="0.45"/><rect x="636" y="455" width="6" height="2.2" fill="#7a7972" opacity="0.29"/><rect x="849" y="378" width="10" height="2.2" fill="#7a7972" opacity="0.39"/><rect x="736" y="478" width="5" height="2.2" fill="#7a7972" opacity="0.47"/><rect x="623" y="362" width="11" height="2.2" fill="#7a7972" opacity="0.45"/><rect x="694" y="356" width="11" height="2.2" fill="#7a7972" opacity="0.45"/><rect x="945" y="360" width="9" height="2.2" fill="#7a7972" opacity="0.36"/><rect x="699" y="395" width="9" height="2.2" fill="#7a7972" opacity="0.35"/><rect x="762" y="360" width="10" height="2.2" fill="#7a7972" opacity="0.44"/><rect x="938" y="413" width="10" height="2.2" fill="#7a7972" opacity="0.41"/><rect x="849" y="438" width="9" height="2.2" fill="#7a7972" opacity="0.37"/><rect x="641" y="341" width="6" height="2.2" fill="#7a7972" opacity="0.26"/><rect x="973" y="422" width="10" height="2.2" fill="#7a7972" opacity="0.25"/><rect x="797" y="495" width="9" height="2.2" fill="#7a7972" opacity="0.38"/><rect x="796" y="353" width="6" height="2.2" fill="#7a7972" opacity="0.30"/><rect x="757" y="404" width="10" height="2.2" fill="#7a7972" opacity="0.30"/><rect x="707" y="385" width="6" height="2.2" fill="#7a7972" opacity="0.34"/><rect x="699" y="422" width="5" height="2.2" fill="#7a7972" opacity="0.53"/><rect x="755" y="504" width="9" height="2.2" fill="#7a7972" opacity="0.45"/><rect x="798" y="505" width="6" height="2.2" fill="#7a7972" opacity="0.45"/><rect x="722" y="456" width="9" height="2.2" fill="#7a7972" opacity="0.30"/><rect x="684" y="339" width="6" height="2.2" fill="#7a7972" opacity="0.27"/><rect x="768" y="510" width="7" height="2.2" fill="#7a7972" opacity="0.34"/><rect x="797" y="386" width="9" height="2.2" fill="#7a7972" opacity="0.47"/><rect x="669" y="378" width="9" height="2.2" fill="#7a7972" opacity="0.53"/><rect x="871" y="413" width="11" height="2.2" fill="#7a7972" opacity="0.25"/><rect x="626" y="475" width="7" height="2.2" fill="#7a7972" opacity="0.26"/><rect x="830" y="513" width="8" height="2.2" fill="#7a7972" opacity="0.36"/><rect x="639" y="348" width="10" height="2.2" fill="#7a7972" opacity="0.40"/><rect x="993" y="345" width="6" height="2.2" fill="#7a7972" opacity="0.27"/><rect x="767" y="346" width="7" height="2.2" fill="#7a7972" opacity="0.37"/><rect x="728" y="344" width="5" height="2.2" fill="#7a7972" opacity="0.54"/><rect x="675" y="427" width="7" height="2.2" fill="#7a7972" opacity="0.41"/><rect x="635" y="391" width="6" height="2.2" fill="#7a7972" opacity="0.41"/><rect x="987" y="443" width="10" height="2.2" fill="#7a7972" opacity="0.31"/><rect x="607" y="432" width="8" height="2.2" fill="#7a7972" opacity="0.42"/><rect x="758" y="448" width="9" height="2.2" fill="#7a7972" opacity="0.52"/><rect x="729" y="416" width="10" height="2.2" fill="#7a7972" opacity="0.32"/><rect x="649" y="391" width="6" height="2.2" fill="#7a7972" opacity="0.48"/><rect x="944" y="391" width="6" height="2.2" fill="#7a7972" opacity="0.27"/><rect x="703" y="350" width="8" height="2.2" fill="#7a7972" opacity="0.42"/><rect x="703" y="346" width="9" height="2.2" fill="#7a7972" opacity="0.26"/><rect x="684" y="386" width="7" height="2.2" fill="#7a7972" opacity="0.28"/><rect x="777" y="392" width="10" height="2.2" fill="#7a7972" opacity="0.42"/><rect x="976" y="453" width="10" height="2.2" fill="#7a7972" opacity="0.42"/><rect x="786" y="482" width="9" height="2.2" fill="#7a7972" opacity="0.54"/><rect x="906" y="461" width="7" height="2.2" fill="#7a7972" opacity="0.49"/><rect x="761" y="358" width="5" height="2.2" fill="#7a7972" opacity="0.30"/><rect x="710" y="457" width="7" height="2.2" fill="#7a7972" opacity="0.27"/><rect x="921" y="435" width="5" height="2.2" fill="#7a7972" opacity="0.27"/><rect x="655" y="399" width="10" height="2.2" fill="#7a7972" opacity="0.53"/><rect x="857" y="377" width="8" height="2.2" fill="#7a7972" opacity="0.36"/><rect x="739" y="337" width="9" height="2.2" fill="#7a7972" opacity="0.50"/><rect x="905" y="352" width="8" height="2.2" fill="#7a7972" opacity="0.30"/><rect x="898" y="415" width="11" height="2.2" fill="#7a7972" opacity="0.49"/><rect x="650" y="392" width="10" height="2.2" fill="#7a7972" opacity="0.39"/><rect x="782" y="414" width="10" height="2.2" fill="#7a7972" opacity="0.53"/><rect x="824" y="510" width="9" height="2.2" fill="#7a7972" opacity="0.28"/><rect x="942" y="411" width="5" height="2.2" fill="#7a7972" opacity="0.54"/><rect x="614" y="439" width="8" height="2.2" fill="#7a7972" opacity="0.51"/><rect x="765" y="374" width="7" height="2.2" fill="#7a7972" opacity="0.31"/><rect x="836" y="399" width="10" height="2.2" fill="#7a7972" opacity="0.32"/><rect x="748" y="380" width="11" height="2.2" fill="#7a7972" opacity="0.50"/><rect x="957" y="446" width="7" height="2.2" fill="#7a7972" opacity="0.29"/><rect x="949" y="423" width="5" height="2.2" fill="#7a7972" opacity="0.30"/><rect x="641" y="464" width="10" height="2.2" fill="#7a7972" opacity="0.31"/><rect x="935" y="393" width="9" height="2.2" fill="#7a7972" opacity="0.51"/><rect x="862" y="479" width="7" height="2.2" fill="#7a7972" opacity="0.25"/><rect x="815" y="441" width="6" height="2.2" fill="#7a7972" opacity="0.37"/><rect x="733" y="340" width="7" height="2.2" fill="#7a7972" opacity="0.36"/><rect x="800" y="462" width="7" height="2.2" fill="#7a7972" opacity="0.54"/><rect x="943" y="501" width="9" height="2.2" fill="#7a7972" opacity="0.45"/><rect x="825" y="479" width="7" height="2.2" fill="#7a7972" opacity="0.43"/><rect x="885" y="429" width="7" height="2.2" fill="#7a7972" opacity="0.27"/><rect x="637" y="399" width="8" height="2.2" fill="#7a7972" opacity="0.48"/><rect x="900" y="390" width="11" height="2.2" fill="#7a7972" opacity="0.33"/><rect x="901" y="348" width="10" height="2.2" fill="#7a7972" opacity="0.45"/><rect x="1002" y="496" width="9" height="2.2" fill="#7a7972" opacity="0.50"/><rect x="910" y="445" width="6" height="2.2" fill="#7a7972" opacity="0.41"/><rect x="976" y="378" width="11" height="2.2" fill="#7a7972" opacity="0.41"/><rect x="765" y="336" width="7" height="2.2" fill="#7a7972" opacity="0.30"/><rect x="874" y="497" width="10" height="2.2" fill="#7a7972" opacity="0.43"/><rect x="762" y="355" width="9" height="2.2" fill="#7a7972" opacity="0.42"/><rect x="900" y="402" width="10" height="2.2" fill="#7a7972" opacity="0.31"/><rect x="728" y="383" width="9" height="2.2" fill="#7a7972" opacity="0.52"/><rect x="670" y="449" width="10" height="2.2" fill="#7a7972" opacity="0.32"/><rect x="626" y="437" width="10" height="2.2" fill="#7a7972" opacity="0.51"/><rect x="906" y="410" width="8" height="2.2" fill="#7a7972" opacity="0.41"/><rect x="980" y="389" width="7" height="2.2" fill="#7a7972" opacity="0.43"/><rect x="1006" y="369" width="5" height="2.2" fill="#7a7972" opacity="0.28"/><rect x="836" y="444" width="6" height="2.2" fill="#7a7972" opacity="0.31"/><rect x="850" y="451" width="9" height="2.2" fill="#7a7972" opacity="0.47"/><rect x="626" y="422" width="10" height="2.2" fill="#7a7972" opacity="0.54"/><rect x="734" y="488" width="9" height="2.2" fill="#7a7972" opacity="0.53"/><rect x="696" y="460" width="10" height="2.2" fill="#7a7972" opacity="0.39"/><rect x="642" y="370" width="6" height="2.2" fill="#7a7972" opacity="0.28"/><rect x="664" y="446" width="6" height="2.2" fill="#7a7972" opacity="0.48"/><rect x="909" y="482" width="10" height="2.2" fill="#7a7972" opacity="0.46"/><rect x="988" y="507" width="9" height="2.2" fill="#7a7972" opacity="0.54"/><rect x="643" y="354" width="5" height="2.2" fill="#7a7972" opacity="0.31"/><rect x="757" y="418" width="9" height="2.2" fill="#7a7972" opacity="0.47"/><rect x="635" y="408" width="8" height="2.2" fill="#7a7972" opacity="0.36"/><rect x="649" y="442" width="7" height="2.2" fill="#7a7972" opacity="0.46"/><rect x="808" y="508" width="11" height="2.2" fill="#7a7972" opacity="0.27"/><rect x="919" y="465" width="7" height="2.2" fill="#7a7972" opacity="0.29"/><rect x="801" y="399" width="9" height="2.2" fill="#7a7972" opacity="0.53"/><rect x="760" y="387" width="8" height="2.2" fill="#7a7972" opacity="0.46"/><rect x="931" y="439" width="7" height="2.2" fill="#7a7972" opacity="0.35"/><rect x="956" y="428" width="5" height="2.2" fill="#7a7972" opacity="0.38"/><rect x="700" y="455" width="5" height="2.2" fill="#7a7972" opacity="0.33"/><rect x="640" y="421" width="11" height="2.2" fill="#7a7972" opacity="0.41"/><rect x="762" y="503" width="6" height="2.2" fill="#7a7972" opacity="0.36"/><rect x="941" y="336" width="10" height="2.2" fill="#7a7972" opacity="0.36"/><rect x="607" y="380" width="8" height="2.2" fill="#7a7972" opacity="0.36"/><rect x="817" y="345" width="6" height="2.2" fill="#7a7972" opacity="0.54"/><rect x="786" y="420" width="6" height="2.2" fill="#7a7972" opacity="0.33"/><rect x="1001" y="459" width="8" height="2.2" fill="#7a7972" opacity="0.27"/><rect x="765" y="475" width="8" height="2.2" fill="#7a7972" opacity="0.43"/><rect x="979" y="451" width="9" height="2.2" fill="#7a7972" opacity="0.26"/><rect x="610" y="474" width="7" height="2.2" fill="#7a7972" opacity="0.51"/><rect x="947" y="500" width="7" height="2.2" fill="#7a7972" opacity="0.55"/><rect x="918" y="496" width="6" height="2.2" fill="#7a7972" opacity="0.48"/><rect x="777" y="510" width="11" height="2.2" fill="#7a7972" opacity="0.32"/><rect x="777" y="384" width="8" height="2.2" fill="#7a7972" opacity="0.34"/><rect x="880" y="357" width="6" height="2.2" fill="#7a7972" opacity="0.39"/><rect x="631" y="404" width="10" height="2.2" fill="#7a7972" opacity="0.52"/><rect x="683" y="338" width="10" height="2.2" fill="#7a7972" opacity="0.54"/><rect x="852" y="360" width="6" height="2.2" fill="#7a7972" opacity="0.53"/><rect x="994" y="341" width="6" height="2.2" fill="#7a7972" opacity="0.38"/><rect x="712" y="471" width="7" height="2.2" fill="#7a7972" opacity="0.48"/><rect x="664" y="428" width="11" height="2.2" fill="#7a7972" opacity="0.46"/><rect x="638" y="355" width="9" height="2.2" fill="#7a7972" opacity="0.36"/><rect x="755" y="421" width="8" height="2.2" fill="#7a7972" opacity="0.54"/><rect x="701" y="437" width="7" height="2.2" fill="#7a7972" opacity="0.41"/><rect x="907" y="359" width="8" height="2.2" fill="#7a7972" opacity="0.46"/><rect x="603" y="474" width="8" height="2.2" fill="#7a7972" opacity="0.40"/><rect x="856" y="478" width="5" height="2.2" fill="#7a7972" opacity="0.40"/><rect x="616" y="404" width="7" height="2.2" fill="#7a7972" opacity="0.26"/><rect x="725" y="416" width="9" height="2.2" fill="#7a7972" opacity="0.53"/><rect x="756" y="430" width="9" height="2.2" fill="#7a7972" opacity="0.53"/><rect x="999" y="513" width="7" height="2.2" fill="#7a7972" opacity="0.30"/><rect x="991" y="349" width="8" height="2.2" fill="#7a7972" opacity="0.47"/><rect x="822" y="405" width="11" height="2.2" fill="#7a7972" opacity="0.34"/><rect x="832" y="484" width="6" height="2.2" fill="#7a7972" opacity="0.36"/><rect x="808" y="437" width="6" height="2.2" fill="#7a7972" opacity="0.39"/><rect x="625" y="351" width="7" height="2.2" fill="#7a7972" opacity="0.29"/><rect x="1006" y="382" width="7" height="2.2" fill="#7a7972" opacity="0.49"/><rect x="911" y="382" width="10" height="2.2" fill="#7a7972" opacity="0.44"/><rect x="763" y="448" width="6" height="2.2" fill="#7a7972" opacity="0.33"/><rect x="968" y="414" width="10" height="2.2" fill="#7a7972" opacity="0.30"/><rect x="658" y="344" width="9" height="2.2" fill="#7a7972" opacity="0.42"/><rect x="604" y="343" width="10" height="2.2" fill="#7a7972" opacity="0.40"/><rect x="966" y="342" width="9" height="2.2" fill="#7a7972" opacity="0.29"/><rect x="903" y="445" width="9" height="2.2" fill="#7a7972" opacity="0.32"/><rect x="999" y="355" width="5" height="2.2" fill="#7a7972" opacity="0.46"/><rect x="639" y="347" width="8" height="2.2" fill="#7a7972" opacity="0.44"/><rect x="975" y="465" width="5" height="2.2" fill="#7a7972" opacity="0.44"/><rect x="954" y="357" width="10" height="2.2" fill="#7a7972" opacity="0.33"/><rect x="725" y="335" width="10" height="2.2" fill="#7a7972" opacity="0.40"/><rect x="979" y="419" width="6" height="2.2" fill="#7a7972" opacity="0.31"/><rect x="711" y="505" width="6" height="2.2" fill="#7a7972" opacity="0.28"/><rect x="748" y="349" width="8" height="2.2" fill="#7a7972" opacity="0.44"/>
</g>
<polygon points="554,483 641,388.6 719.3,333.2 1022.2,330.2 1011.6,399.7 927.7,518.3" fill="none" stroke="#17170f" stroke-width="1.8" stroke-linejoin="round"/>
<polyline points="1013.5,402.5 930,520.5" fill="none" stroke="#8a4e28" stroke-width="3.4" stroke-linejoin="round" stroke-linecap="round"/>
<polyline points="1011.6,399.7 927.7,518.3" fill="none" stroke="#17170f" stroke-width="1.3" stroke-linejoin="round" stroke-linecap="round"/>
<polygon points="1004,409 1014,408 1014,425 995,426" fill="#9a6836" stroke="#17170f" stroke-width="1.2" stroke-linejoin="round"/>
<polygon points="1011,408.3 1014,408 1014,425 1011,425.2" fill="#6e4520"/>
<polygon points="981,440 991,439 991,456 972,457" fill="#9a6836" stroke="#17170f" stroke-width="1.2" stroke-linejoin="round"/>
<polygon points="988,439.3 991,439 991,456 988,456.2" fill="#6e4520"/>
<polygon points="958,472 968,471 968,488 949,489" fill="#9a6836" stroke="#17170f" stroke-width="1.2" stroke-linejoin="round"/>
<polygon points="965,471.3 968,471 968,488 965,488.2" fill="#6e4520"/>
<polygon points="936,503 946,502 946,519 927,520" fill="#9a6836" stroke="#17170f" stroke-width="1.2" stroke-linejoin="round"/>
<polygon points="943,502.3 946,502 946,519 943,519.2" fill="#6e4520"/>
<polygon points="554,483 927.7,518.3 925.9,524.8 554.3,488.8" fill="#9b6944" stroke="#17170f" stroke-width="1.5" stroke-linejoin="round"/>
<polygon points="942.2,412.5 954.5,400 961.5,380 990.5,365.5 991.4,374 961,413" fill="#2a2a26" opacity="0.72"/>
<polygon points="926.7,330.2 941.8,330.2 941.8,412 926.7,412" fill="#fdeeb2" stroke="#17170f" stroke-width="1.6" stroke-linejoin="round"/>
<polygon points="941.8,330.2 953.3,330.2 953.3,399.7 941.8,412" fill="#b08d5e" stroke="#17170f" stroke-width="1.6" stroke-linejoin="round"/>
<polygon points="618.3,517 651.8,521.3 653,579.9 621,575" fill="#33221a" stroke="#17170f" stroke-width="1.8" stroke-linejoin="round"/><polygon points="619.64,517.172 623.66,517.688 626.12,575.784 622.28,575.196" fill="#857565"/><polygon points="627.221504,522.7739584 649.933256,525.7323375999999 650.963816,572.5841135999999 629.068544,569.2991423999999" fill="url(#glass)"/><polyline points="638.57738,524.253148 640.01618,570.9416279999999" fill="none" stroke="#40352e" stroke-width="3.6" stroke-linejoin="round" stroke-linecap="round"/><polyline points="629.068544,569.2991423999999 650.963816,572.5841135999999" fill="none" stroke="#7a4a2a" stroke-width="2.2" stroke-linejoin="round" stroke-linecap="round"/><polyline points="628.052672,543.7102911999999 650.397008,546.8156367999999" fill="none" stroke="#5a5f80" stroke-width="0.8" stroke-linejoin="round" stroke-linecap="round"/>
<polygon points="831.3,542.2 875.5,547.1 875.8,616 831.3,609" fill="#33221a" stroke="#17170f" stroke-width="1.8" stroke-linejoin="round"/><polygon points="833.068,542.3960000000001 838.372,542.984 838.42,610.12 833.0799999999999,609.28" fill="#857565"/><polygon points="842.8336192,548.8657344000001 872.9236288,552.3140016 873.1495168,607.3352176 842.8962111999999,602.7438784" fill="url(#glass)"/><polyline points="857.878624,550.589868 858.022864,605.039548" fill="none" stroke="#40352e" stroke-width="3.6" stroke-linejoin="round" stroke-linecap="round"/><polyline points="842.8962111999999,602.7438784 873.1495168,607.3352176" fill="none" stroke="#7a4a2a" stroke-width="2.2" stroke-linejoin="round" stroke-linecap="round"/><polyline points="842.8617856,573.1108992000001 873.0252783999999,577.0735488" fill="none" stroke="#5a5f80" stroke-width="0.8" stroke-linejoin="round" stroke-linecap="round"/>
<polygon points="726.8,530 755.5,533.6 756.7,633 729,627.7" fill="#4a2c1c" stroke="#17170f" stroke-width="1.8" stroke-linejoin="round"/>
<polygon points="728.2,531.5 734.5,532.3 736,628 730,627" fill="#8f7f66"/>
<polygon points="737,533.5 754.5,535.5 755.5,631 738,627.7" fill="#a55c2b"/>
<polygon points="740.5,539.7 753,541.3000000000001 753.5,561.25 741,559.65" fill="#b56a33" stroke="#5e3014" stroke-width="0.9" stroke-linejoin="round"/>
<polygon points="740.5,570.1 753,571.7 753.5,592.6 741,591.0" fill="#b56a33" stroke="#5e3014" stroke-width="0.9" stroke-linejoin="round"/>
<polygon points="740.5,600.5 753,602.1 753.5,623.95 741,622.35" fill="#b56a33" stroke="#5e3014" stroke-width="0.9" stroke-linejoin="round"/>
<rect x="594" y="650" width="7" height="35" fill="#e9e9e6"/><rect x="594" y="650" width="1.6" height="35" fill="#3a3a36"/><rect x="599.6" y="650" width="1.6" height="35" fill="#55554f"/>
<rect x="581.5" y="628" width="28.500" height="23.500" rx="3" fill="#111"/>
<polygon points="584,636.5 592.5,637 592.5,649 584,647.5" fill="#f6f6f4"/>
<polygon points="594,636.5 608,635.5 608,648.5 594,650" fill="#7d7f88"/>
<polygon points="587,630.5 603,630.5 606,633 594,634.5 585.5,633.5" fill="#e6e6e4"/>
</g>
<g filter="url(#soft)">
<polyline points="501,104 523.5,603" fill="none" stroke="#4a52a8" stroke-width="1.2" stroke-linejoin="round" stroke-linecap="round"/>
<polygon points="377.6,358 380.2,357 388.9,460 399.7,619.5 387.2,620 382.2,460" fill="#7c3b1c" stroke="#2e140a" stroke-width="1" stroke-linejoin="round"/>
<polyline points="358.1,381.9 378.6,355.9 400.5,374.4" fill="none" stroke="#0b1710" stroke-width="3.2" stroke-linejoin="round" stroke-linecap="round"/>
<polygon points="378.6,357.3 390.2,368.2 391.6,379.2 384.7,376.4 382.0,366.9" fill="#15251b" stroke="#0b1710" stroke-width="1.6" stroke-linejoin="round"/>
<polygon points="377.9,358.7 364.2,376.4 373.8,368.2" fill="#0b1710" stroke="#0b1710" stroke-width="1.6" stroke-linejoin="round"/>
<polyline points="348.5,425.6 382.0,392.8 414.8,412.7" fill="none" stroke="#0b1710" stroke-width="3.2" stroke-linejoin="round" stroke-linecap="round"/>
<polygon points="380.6,396.9 367.7,409.2 367.0,418.8 371.1,425.6 379.3,425.6 380.0,410.6" fill="#1b5a30" stroke="#0b1710" stroke-width="1.6" stroke-linejoin="round"/>
<polygon points="384.7,398.3 399.8,405.1 397.7,418.1 394.3,416.1 387.5,407.9" fill="#143a22" stroke="#0b1710" stroke-width="1.6" stroke-linejoin="round"/>
<polyline points="340.3,460.5 383.4,435.9 431.2,464.6" fill="none" stroke="#0b1710" stroke-width="3.2" stroke-linejoin="round" stroke-linecap="round"/>
<polygon points="382.0,439.3 367.7,453.0 373.8,459.8 377.2,468.7 382.0,465.3 382.7,451.6" fill="#2c8a48" stroke="#0b1710" stroke-width="1.6" stroke-linejoin="round"/>
<polygon points="387.5,439.3 409.3,455.7 409.3,461.2 405.2,466.0 395.7,461.2 388.8,458.4" fill="#1f6a38" stroke="#0b1710" stroke-width="1.6" stroke-linejoin="round"/>
<polygon points="386.4,475.8 366.4,484.9 328.2,518.1 354.8,505.7 363.1,508.5 374.7,499.0 383.0,489.9" fill="#0f2a1a" stroke="#0b1710" stroke-width="2" stroke-linejoin="round"/>
<polygon points="379.7,481.6 365.6,491.6 359.0,504.8 363.9,507.3 373.9,498.2 382.2,488.2" fill="#3aa058" stroke="#0b1710" stroke-width="1" stroke-linejoin="round"/>
<polygon points="389.7,476.6 424.6,495.7 435.4,508.2 416.3,501.5 393.0,486.6" fill="#123320" stroke="#0b1710" stroke-width="2" stroke-linejoin="round"/>
<polygon points="390.5,479.1 416.3,493.2 408.0,495.7 393.0,486.6" fill="#1f6a38" stroke="#0b1710" stroke-width="1" stroke-linejoin="round"/>
<polygon points="388.0,523.1 354.8,538.1 313.3,555.5 354.8,548.0 354.8,556.3 364.8,566.3 378.1,549.7 383.0,534.7" fill="#0f2a1a" stroke="#0b1710" stroke-width="2" stroke-linejoin="round"/>
<polygon points="354.8,539.7 324.9,553.0 353.1,546.4" fill="#2c8a48" stroke="#0b1710" stroke-width="1" stroke-linejoin="round"/>
<polygon points="379.7,533.1 366.4,543.0 358.1,553.0 364.8,563.8 375.6,548.9 381.4,538.1" fill="#45aa62" stroke="#0b1710" stroke-width="1" stroke-linejoin="round"/>
<polygon points="393.0,518.1 414.6,526.4 414.6,533.1 460.3,550.5 412.9,538.1 394.7,529.8" fill="#0e2216" stroke="#0b1710" stroke-width="2" stroke-linejoin="round"/>
<polygon points="396.3,558.0 426.2,562.1 474.4,578.8 449.5,578.3 416.3,569.6 399.7,566.3" fill="#10281a" stroke="#0b1710" stroke-width="2" stroke-linejoin="round"/>
<polygon points="386.4,559.7 361.5,576.3 361.5,584.6 339.9,608.6 373.1,602.8 384.7,591.2 389.7,594.5 393.0,582.9" fill="#0f2a1a" stroke="#0b1710" stroke-width="2" stroke-linejoin="round"/>
<polygon points="379.7,576.3 354.8,599.5 344.8,607.0 371.4,601.2 383.9,589.5" fill="#3fa45a" stroke="#0b1710" stroke-width="1" stroke-linejoin="round"/>
<polygon points="383.9,559.7 386.4,576.3 391.3,594.5 397.2,582.9 393.0,566.3" fill="#3d7a55" stroke="#0b1710" stroke-width="1" stroke-linejoin="round"/>
<polygon points="393.0,559.7 416.3,576.3 436.2,600.3 414.6,592.9 406.3,592.9 396.3,584.6" fill="#14402a" stroke="#0b1710" stroke-width="2" stroke-linejoin="round"/>
<polygon points="396.3,568.0 412.9,581.2 426.2,596.2 414.6,591.2 401.3,582.9" fill="#2c7a46" stroke="#0b1710" stroke-width="1" stroke-linejoin="round"/>
<polygon points="387.7,595.4 398.0,591.2 399.7,619.4 387.2,619.8" fill="#7c3b1c" stroke="#2e140a" stroke-width="1" stroke-linejoin="round"/>
<g transform="translate(990,590) scale(0.1583)" stroke-linejoin="round" stroke-linecap="round">
<ellipse cx="1285" cy="665" rx="85" ry="55" fill="#0c0c0e"/>
<path d="M880 660 L1230 640 L1390 600 L1340 670 L1200 705 L900 715 Z" fill="#0c0c10"/>
<path d="M75 470 C72 430 78 380 105 320 C120 295 140 280 160 270 C200 250 250 235 290 225 C350 200 430 165 500 140 C540 122 580 108 620 100 C680 85 740 80 800 80 C870 80 940 88 1000 100 C1070 115 1130 140 1180 165 C1210 180 1232 192 1250 205 C1275 225 1295 248 1310 270 C1335 300 1350 325 1360 350 C1385 395 1393 430 1395 470 C1402 500 1402 520 1400 540 C1398 570 1393 592 1385 610 C1370 640 1350 655 1330 662 L1200 682 L940 695 L700 672 L270 565 L120 520 Z" fill="#2073be" stroke="#081020" stroke-width="13"/>
<path d="M1020 500 C1060 535 1200 520 1340 440 C1380 470 1395 520 1385 600 C1360 650 1330 660 1200 680 L945 690 C940 620 930 580 870 515 Z" fill="#1c66ab"/>
<path d="M505 140 C560 118 600 106 640 98 C700 84 760 80 800 80 C880 80 960 90 1020 104 C1090 120 1140 145 1190 170 L1000 190 C960 200 930 215 915 228 L990 355 L870 340 C850 290 830 240 760 205 C700 180 640 168 580 162 Z" fill="#58aef8" stroke="#081020" stroke-width="10"/>
<path d="M335 265 L505 162 L580 180 L545 297 Z" fill="#a7a7aa" stroke="#081020" stroke-width="14"/>
<path d="M580 300 L612 190 C680 195 750 225 790 272 L800 332 Z" fill="#b3b2b2" stroke="#081020" stroke-width="14"/>
<path d="M806 332 L818 280 L850 338 Z" fill="#a8a8a8" stroke="#081020" stroke-width="8"/>
<path d="M930 242 C990 220 1100 205 1200 200 C1230 212 1285 262 1310 300 C1270 322 1150 345 1000 356 C975 320 950 280 930 242 Z" fill="#8d8d8e" stroke="#081020" stroke-width="14"/>
<path d="M915 226 C960 205 1080 178 1190 170 L1232 200 C1130 204 1010 218 932 246 Z" fill="#081020"/>
<path d="M1020 235 l90 -12 l15 30 M1160 215 l30 35" stroke="#c9c9c9" stroke-width="9" fill="none"/>
<path d="M1000 356 C1005 420 1010 470 1020 500 C1060 535 1200 520 1340 440" fill="none" stroke="#154f8e" stroke-width="10"/>
<path d="M860 452 C880 432 940 416 1000 415 C1050 415 1090 428 1100 448 C1080 464 1040 470 1000 470 C950 472 900 472 872 468 Z" fill="#a8302a" stroke="#081020" stroke-width="11"/>
<path d="M900 440 C940 428 1000 425 1060 434" stroke="#d96a5a" stroke-width="8" fill="none"/>
<path d="M1312 372 C1330 352 1352 350 1360 372 C1366 392 1360 412 1335 420 Z" fill="#8a2a26" stroke="#081020" stroke-width="9"/>
<path d="M300 290 L545 300 L800 335 L990 356" fill="none" stroke="#081020" stroke-width="11"/>
<path d="M272 300 C258 380 262 480 282 560 M545 300 C520 400 510 500 512 604 M800 335 C775 400 750 470 700 520" fill="none" stroke="#081020" stroke-width="10"/>
<path d="M270 560 L700 668" fill="none" stroke="#154f8e" stroke-width="14"/>
<ellipse cx="490" cy="357" rx="17" ry="12" fill="#154f8e" stroke="#081020" stroke-width="6"/>
<ellipse cx="726" cy="381" rx="17" ry="12" fill="#154f8e" stroke="#081020" stroke-width="6"/>
<circle cx="1203" cy="415" r="20" fill="#1b5c9c" stroke="#081020" stroke-width="6"/>
<path d="M1132 628 L1298 598 L1303 622 L1137 652 Z" fill="#c4c4c6" stroke="#222" stroke-width="5"/>
<path d="M690 650 C695 590 720 540 790 492 C850 485 905 540 930 590 C940 630 942 660 940 690" fill="#2073be" stroke="#081020" stroke-width="12"/>
<path d="M80 410 C95 370 130 345 170 348 C215 355 250 420 268 545" fill="#2073be" stroke="#081020" stroke-width="12"/>
<ellipse cx="808" cy="682" rx="105" ry="125" fill="#09090b"/>
<ellipse cx="790" cy="686" rx="58" ry="82" fill="#1a1a1f"/>
<ellipse cx="165" cy="502" rx="82" ry="110" fill="#09090b"/>
<ellipse cx="150" cy="506" rx="44" ry="68" fill="#1a1a1f"/>
<line x1="790" y1="686" x2="840" y2="708" stroke="#4a4a52" stroke-width="9"/>
<line x1="790" y1="686" x2="791" y2="762" stroke="#4a4a52" stroke-width="9"/>
<line x1="790" y1="686" x2="741" y2="711" stroke="#4a4a52" stroke-width="9"/>
<line x1="790" y1="686" x2="759" y2="625" stroke="#4a4a52" stroke-width="9"/>
<line x1="790" y1="686" x2="820" y2="624" stroke="#4a4a52" stroke-width="9"/>
<line x1="150" y1="506" x2="188" y2="524" stroke="#4a4a52" stroke-width="9"/>
<line x1="150" y1="506" x2="151" y2="568" stroke="#4a4a52" stroke-width="9"/>
<line x1="150" y1="506" x2="112" y2="526" stroke="#4a4a52" stroke-width="9"/>
<line x1="150" y1="506" x2="126" y2="456" stroke="#4a4a52" stroke-width="9"/>
<line x1="150" y1="506" x2="173" y2="455" stroke="#4a4a52" stroke-width="9"/>
</g>
</g>
<rect x="79" y="101" width="1753" height="2" fill="#b0b6b4"/><rect x="80" y="103" width="1752" height="2" fill="#737e7c"/><rect x="79" y="101" width="1.400" height="893" fill="#aab0ae"/><rect x="80.400" y="103" width="1.500" height="891" fill="#737e7c"/>
<rect x="79" y="992.500" width="1753" height="2" fill="#f4f4ee"/>
</svg>
<svg class="abs" style="left:1340px;top:120px" width="420" height="700" viewBox="1340 120 420 700">
<defs><filter id="psoft"><feGaussianBlur stdDeviation="0.35"/></filter></defs>
<rect x="1352.500" y="131" width="393" height="677" fill="#f2946b" stroke="#cf7a60" stroke-width="1.5"/>
<rect x="1363.500" y="175" width="371" height="620.500" fill="#fff"/>
<text x="1548" y="161" font-size="22" fill="#5a3024" text-anchor="middle" font-weight="normal" textLength="56" lengthAdjust="spacingAndGlyphs">Styles</text>
<rect x="1705" y="140" width="27" height="26.500" fill="#d9584c"/>
<path d="M1714.500 149.500 l7 7 m0 -7 l-7 7" stroke="#fff" stroke-width="2"/>
<rect x="1367.500" y="179" width="94" height="100.500" fill="#fff" stroke="#a7a7a7"/>
<rect x="1370" y="182" width="89" height="60" fill="#eef6f5"/><rect x="1370" y="222" width="89" height="55" fill="#d5d6c2"/>
<line x1="1373" y1="183" x2="1376" y2="262" stroke="#3535a8" stroke-width="1.2"/><line x1="1376" y1="262" x2="1428" y2="275" stroke="#b04040" stroke-width="1"/>
<path d="M1376 216 L1404 194 L1432 190 L1403 215 Z" fill="#c2c2c2" stroke="#222" stroke-width="1.6"/>
<path d="M1376 216 L1403 215 L1403 263 L1377 252 Z" fill="#fff" stroke="#222" stroke-width="1.8"/>
<path d="M1403 215 L1432 190 L1432 240 L1403 263 Z" fill="#fff" stroke="#222" stroke-width="1.4"/>
<path d="M1417 222 q18 -6 38 0 v36 q-20 8 -38 0 z" fill="#cfdfe5" stroke="#333" stroke-width="1.3"/><path d="M1417 222 q18 -6 38 0" fill="none" stroke="#222" stroke-width="3"/>
<rect x="1466.500" y="180" width="225" height="26" fill="#fff" stroke="#e6e6e6"/><path d="M1466.500 206 V180 H1691.500" fill="none" stroke="#6e6e6e" stroke-width="1.6"/>
<text x="1474" y="198" font-size="15.5" fill="#222" text-anchor="start" font-weight="normal" textLength="113" lengthAdjust="spacingAndGlyphs">Style par défaut</text>
<rect x="1466.500" y="209.500" width="225" height="69" fill="#fff" stroke="#e6e6e6"/><path d="M1466.500 278.500 V209.500 H1691.500" fill="none" stroke="#6e6e6e" stroke-width="1.6"/>
<text x="1474" y="228" font-size="15.5" fill="#222" text-anchor="start" font-weight="normal" textLength="194" lengthAdjust="spacingAndGlyphs">Couleurs par défaut. Arêtes</text>
<text x="1474" y="247" font-size="15.5" fill="#222" text-anchor="start" font-weight="normal" textLength="177" lengthAdjust="spacingAndGlyphs">profilées. Ciel bleu clair et</text>
<text x="1474" y="266" font-size="15.5" fill="#222" text-anchor="start" font-weight="normal" textLength="121" lengthAdjust="spacingAndGlyphs">arrière-plan brun.</text>
<path d="M1708 184 h14 l-7 6 z" fill="#111"/><rect x="1706" y="192" width="17.500" height="13" fill="#111"/><path d="M1714.800 194 v9 M1710.300 198.500 h9" stroke="#fff" stroke-width="2.600"/>
<path d="M1706 222 l12 -7 l6 3 l-12 7 z" fill="#a9ad8a" stroke="#555" stroke-width="0.800"/><rect x="1717" y="224" width="10" height="9" fill="#3b3bb5" stroke="#222" stroke-width="0.700"/><circle cx="1710.500" cy="233.500" r="7" fill="#fff" stroke="#111" stroke-width="1.600"/><path d="M1710.500 229.500 v8 M1706.500 233.500 h8" stroke="#111" stroke-width="2"/>
<path d="M1706 262 a9 9 0 0 1 15 -5 l2 -3 v8 h-8 l3 -3 a5.500 5.500 0 0 0 -9 3 z M1724 266 a9 9 0 0 1 -15 5 l-2 3 v-8 h8 l-3 3 a5.500 5.500 0 0 0 9 -3 z" fill="#9b9b9b"/>
<rect x="1363.500" y="283.500" width="371" height="1" fill="#d5d5d5"/>
<text x="1373" y="312" font-size="15.5" fill="#222" text-anchor="start" font-weight="normal" textLength="84" lengthAdjust="spacingAndGlyphs">Sélectionner</text>
<text x="1475" y="315" font-size="15.5" fill="#222" text-anchor="start" font-weight="normal" textLength="46" lengthAdjust="spacingAndGlyphs">Édition</text>
<text x="1538.5" y="315" font-size="15.5" fill="#222" text-anchor="start" font-weight="normal" textLength="57.5" lengthAdjust="spacingAndGlyphs">Mélange</text>
<rect x="1468.5" y="295" width="1.300" height="26" fill="#8a8a8a"/>
<rect x="1529.5" y="295" width="1.300" height="26" fill="#8a8a8a"/>
<rect x="1605" y="295" width="1.300" height="26" fill="#8a8a8a"/>
<path d="M1375 344.500 l10 -10 v5.500 h8 v9 h-8 v5.500 z" fill="#fff" stroke="#111" stroke-width="2.400" stroke-linejoin="miter"/>
<path d="M1427.500 344.500 l-9 -9 v5 h-8 v8 h8 v5 z" fill="#fff" stroke="#a5a5a5" stroke-width="2"/>
<path d="M1441.500 345 l11 -11 l11 11 h-3.500 v10 h-15 v-10 z" fill="#fff" stroke="#111" stroke-width="2.400"/><rect x="1449.500" y="347.500" width="5.500" height="7.500" fill="#111"/>
<rect x="1473.500" y="330" width="220" height="28" fill="#fff" stroke="#cfcfcf"/><path d="M1473.500 358 V330 H1693.500" fill="none" stroke="#6e6e6e" stroke-width="1.600"/>
<rect x="1480" y="356.500" width="185" height="1.200" fill="#333"/>
<text x="1478.5" y="349.5" font-size="15.5" fill="#222" text-anchor="start" font-weight="normal" textLength="120" lengthAdjust="spacingAndGlyphs">Styles par défaut</text>
<rect x="1671" y="331.500" width="22" height="26" fill="#fff" stroke="#bdbdbd" stroke-width="0.800"/><path d="M1677 342.500 h10.500 l-5.200 6 z" fill="#111"/>
<rect x="1707" y="336" width="9" height="16" fill="#dfe6f5" stroke="#111" stroke-width="1.400"/><path d="M1716 335 l10 9.500 l-10 9.500 z" fill="#111"/><path d="M1709 341 h5 M1709 344.500 h5 M1709 348 h5" stroke="#111" stroke-width="1"/>
<rect x="1363.500" y="365.500" width="371" height="1" fill="#d9d9d9"/>
<g filter="url(#psoft)">
<g transform="translate(1368,370)"><rect x="0.5" y="0.5" width="71" height="71" fill="#fff" stroke="#a9a9a9" stroke-width="1"/><line x1="6.500" y1="3" x2="8.500" y2="50" stroke="#3a3ab0" stroke-width="0.9"/><line x1="8.500" y1="50" x2="46" y2="68" stroke="#c85a5a" stroke-width="0.8"/><path d="M8 26 L30 10 L49 9 L49 40 M30 10 L30 52 M8 26 L27 27 L49 9 M8 26 L9 52 L27 60 L27 27 M9 52 L30 44 L49 40 M27 60 L49 40" fill="none" stroke="#333" stroke-width="0.9"/><path d="M36 33 q10 -4 28 -1 v22 q-14 6 -28 1 z M36 56 q12 -6 28 -2" fill="none" stroke="#333" stroke-width="1.3"/></g>
<g transform="translate(1443,370)"><rect x="0.5" y="0.5" width="71" height="71" fill="#fff" stroke="#a9a9a9" stroke-width="1"/><line x1="6.500" y1="3" x2="8.500" y2="50" stroke="#3a3ab0" stroke-width="0.9"/><line x1="8.500" y1="50" x2="46" y2="68" stroke="#c85a5a" stroke-width="0.8"/><path d="M8 26 L30 10 L49 9 L27 27 Z" fill="#fff" stroke="#777" stroke-width="0.8"/><path d="M8 26 L27 27 L27 60 L9 52 Z" fill="#ffffff" stroke="#777" stroke-width="0.8"/><path d="M27 27 L49 9 L49 40 L27 60 Z" fill="#ffffff" stroke="#777" stroke-width="0.8"/><path d="M37 31 q13 -4 27 0 v24 q-13 7 -27 0 z" fill="#fff" stroke="#777" stroke-width="0.8"/></g>
<g transform="translate(1518,370)"><rect x="0.5" y="0.5" width="71" height="71" fill="#fff" stroke="#a9a9a9" stroke-width="1"/><line x1="6.500" y1="3" x2="8.500" y2="50" stroke="#3a3ab0" stroke-width="0.9"/><line x1="8.500" y1="50" x2="46" y2="68" stroke="#c85a5a" stroke-width="0.8"/><path d="M8 26 L30 10 L49 9 L27 27 Z" fill="#c9c9c9" stroke="#666" stroke-width="0.9"/><path d="M8 26 L27 27 L27 60 L9 52 Z" fill="#ffffff" stroke="#666" stroke-width="0.9"/><path d="M27 27 L49 9 L49 40 L27 60 Z" fill="#ffffff" stroke="#666" stroke-width="0.9"/><path d="M37 31 q13 -4 27 0 v24 q-13 7 -27 0 z" fill="#cfe0e6" stroke="#666" stroke-width="0.9"/></g>
<g transform="translate(1593,370)"><rect x="0.5" y="0.5" width="71" height="71" fill="#fff" stroke="#a9a9a9" stroke-width="1"/><line x1="6.500" y1="3" x2="8.500" y2="50" stroke="#3a3ab0" stroke-width="0.9"/><line x1="8.500" y1="50" x2="46" y2="68" stroke="#c85a5a" stroke-width="0.8"/><path d="M8 26 L30 10 L49 9 L27 27 Z" fill="#c2c6c8" stroke="#777" stroke-width="0.9"/><path d="M8 26 L27 27 L27 60 L9 52 Z" fill="#e2e9ea" stroke="#777" stroke-width="0.9"/><path d="M27 27 L49 9 L49 40 L27 60 Z" fill="#e2e9ea" stroke="#777" stroke-width="0.9"/><path d="M37 31 q13 -4 27 0 v24 q-13 7 -27 0 z" fill="#eef3f3" stroke="#777" stroke-width="0.9"/></g>
<g transform="translate(1368,445)"><rect x="0.5" y="0.5" width="71" height="71" fill="#fff" stroke="#a9a9a9" stroke-width="1"/><line x1="6.500" y1="3" x2="8.500" y2="50" stroke="#3a3ab0" stroke-width="0.9"/><line x1="8.500" y1="50" x2="46" y2="68" stroke="#c85a5a" stroke-width="0.8"/><path d="M8 26 L30 10 L49 9 L27 27 Z" fill="#c9c9c9" stroke="#555" stroke-width="1.1"/><path d="M8 26 L27 27 L27 60 L9 52 Z" fill="#ffffff" stroke="#555" stroke-width="1.1"/><path d="M27 27 L49 9 L49 40 L27 60 Z" fill="#ffffff" stroke="#555" stroke-width="1.1"/><path d="M37 31 q13 -4 27 0 v24 q-13 7 -27 0 z" fill="#cfe0e6" stroke="#555" stroke-width="1.1"/></g>
<g transform="translate(1443,445)"><rect x="0.5" y="0.5" width="71" height="71" fill="#fff" stroke="#a9a9a9" stroke-width="1"/><linearGradient id="gc7cfdc" x1="0" y1="0" x2="0" y2="1"><stop offset="0" stop-color="#c7cfdc"/><stop offset="1" stop-color="#f4f8f8"/></linearGradient><rect x="3" y="3" width="66" height="34" fill="url(#gc7cfdc)"/><rect x="3" y="34" width="66" height="35" fill="#a9b48e"/><line x1="6.500" y1="3" x2="8.500" y2="50" stroke="#3a3ab0" stroke-width="0.9"/><line x1="8.500" y1="50" x2="46" y2="68" stroke="#c85a5a" stroke-width="0.8"/><path d="M8 26 L30 10 L49 9 L27 27 Z" fill="#c9c9c9" stroke="#333" stroke-width="1.1"/><path d="M8 26 L27 27 L27 60 L9 52 Z" fill="#ffffff" stroke="#333" stroke-width="1.1"/><path d="M27 27 L49 9 L49 40 L27 60 Z" fill="#ffffff" stroke="#333" stroke-width="1.1"/><path d="M37 31 q13 -4 27 0 v24 q-13 7 -27 0 z" fill="#cfe0e6" stroke="#333" stroke-width="1.1"/><path d="M37 31 q13 -4 27 0" fill="none" stroke="#222" stroke-width="2.2"/></g>
<g transform="translate(1518,445)"><rect x="0.5" y="0.5" width="71" height="71" fill="#fff" stroke="#a9a9a9" stroke-width="1"/><linearGradient id="g86c4e4" x1="0" y1="0" x2="0" y2="1"><stop offset="0" stop-color="#86c4e4"/><stop offset="1" stop-color="#f4f8f8"/></linearGradient><rect x="3" y="3" width="66" height="34" fill="url(#g86c4e4)"/><rect x="3" y="34" width="66" height="35" fill="#ddd9d3"/><line x1="6.500" y1="3" x2="8.500" y2="50" stroke="#3a3ab0" stroke-width="0.9"/><line x1="8.500" y1="50" x2="46" y2="68" stroke="#c85a5a" stroke-width="0.8"/><path d="M8 26 L30 10 L49 9 L27 27 Z" fill="#c9c9c9" stroke="#333" stroke-width="1.1"/><path d="M8 26 L27 27 L27 60 L9 52 Z" fill="#ffffff" stroke="#333" stroke-width="1.1"/><path d="M27 27 L49 9 L49 40 L27 60 Z" fill="#ffffff" stroke="#333" stroke-width="1.1"/><path d="M37 31 q13 -4 27 0 v24 q-13 7 -27 0 z" fill="#cfe0e6" stroke="#333" stroke-width="1.1"/><path d="M37 31 q13 -4 27 0" fill="none" stroke="#222" stroke-width="2.2"/></g>
<g transform="translate(1593,445)"><rect x="0.5" y="0.5" width="71" height="71" fill="#fff" stroke="#a9a9a9" stroke-width="1"/><linearGradient id="g8fc9ea" x1="0" y1="0" x2="0" y2="1"><stop offset="0" stop-color="#8fc9ea"/><stop offset="1" stop-color="#f4f8f8"/></linearGradient><rect x="3" y="3" width="66" height="34" fill="url(#g8fc9ea)"/><rect x="3" y="34" width="66" height="35" fill="#d9d4d2"/><line x1="6.500" y1="3" x2="8.500" y2="50" stroke="#3a3ab0" stroke-width="0.9"/><line x1="8.500" y1="50" x2="46" y2="68" stroke="#c85a5a" stroke-width="0.8"/><path d="M8 26 L30 10 L49 9 L27 27 Z" fill="#c9c9c9" stroke="#333" stroke-width="1.1"/><path d="M8 26 L27 27 L27 60 L9 52 Z" fill="#ffffff" stroke="#333" stroke-width="1.1"/><path d="M27 27 L49 9 L49 40 L27 60 Z" fill="#ffffff" stroke="#333" stroke-width="1.1"/><path d="M37 31 q13 -4 27 0 v24 q-13 7 -27 0 z" fill="#cfe0e6" stroke="#333" stroke-width="1.1"/><path d="M37 31 q13 -4 27 0" fill="none" stroke="#222" stroke-width="2.2"/></g>
<g transform="translate(1368,520)"><rect x="0.5" y="0.5" width="71" height="71" fill="#fff" stroke="#a9a9a9" stroke-width="1"/><linearGradient id="ge3e5e4" x1="0" y1="0" x2="0" y2="1"><stop offset="0" stop-color="#e3e5e4"/><stop offset="1" stop-color="#f4f8f8"/></linearGradient><rect x="3" y="3" width="66" height="34" fill="url(#ge3e5e4)"/><rect x="3" y="34" width="66" height="35" fill="#cbcbc8"/><line x1="6.500" y1="3" x2="8.500" y2="50" stroke="#3a3ab0" stroke-width="0.9"/><line x1="8.500" y1="50" x2="46" y2="68" stroke="#c85a5a" stroke-width="0.8"/><path d="M8 26 L30 10 L49 9 L27 27 Z" fill="#c9c9c9" stroke="#333" stroke-width="1.1"/><path d="M8 26 L27 27 L27 60 L9 52 Z" fill="#ffffff" stroke="#333" stroke-width="1.1"/><path d="M27 27 L49 9 L49 40 L27 60 Z" fill="#ffffff" stroke="#333" stroke-width="1.1"/><path d="M37 31 q13 -4 27 0 v24 q-13 7 -27 0 z" fill="#cfe0e6" stroke="#333" stroke-width="1.1"/><path d="M37 31 q13 -4 27 0" fill="none" stroke="#222" stroke-width="2.2"/></g>
<g transform="translate(1443,520)"><rect x="0.5" y="0.5" width="71" height="71" fill="#fff" stroke="#a9a9a9" stroke-width="1"/><line x1="6.500" y1="3" x2="8.500" y2="50" stroke="#3a3ab0" stroke-width="0.9"/><line x1="8.500" y1="50" x2="46" y2="68" stroke="#c85a5a" stroke-width="0.8"/><path d="M8 26 L30 10 L49 9 L27 27 Z" fill="#c9c9c9" stroke="#333" stroke-width="1.1"/><path d="M8 26 L27 27 L27 60 L9 52 Z" fill="#ffffff" stroke="#333" stroke-width="1.1"/><path d="M27 27 L49 9 L49 40 L27 60 Z" fill="#ffffff" stroke="#333" stroke-width="1.1"/><path d="M37 31 q13 -4 27 0 v24 q-13 7 -27 0 z" fill="#cfe0e6" stroke="#333" stroke-width="1.1"/><path d="M37 31 q13 -4 27 0" fill="none" stroke="#222" stroke-width="2.2"/></g>
<g transform="translate(1518,520)"><rect x="0.5" y="0.5" width="71" height="71" fill="#fff" stroke="#a9a9a9" stroke-width="1"/><rect x="3" y="3" width="66" height="66" fill="#e3e0de"/><line x1="6.500" y1="3" x2="8.500" y2="50" stroke="#3a3ab0" stroke-width="0.9"/><line x1="8.500" y1="50" x2="46" y2="68" stroke="#c85a5a" stroke-width="0.8"/><path d="M8 26 L30 10 L49 9 L27 27 Z" fill="#c9c9c9" stroke="#333" stroke-width="1.1"/><path d="M8 26 L27 27 L27 60 L9 52 Z" fill="#ffffff" stroke="#333" stroke-width="1.1"/><path d="M27 27 L49 9 L49 40 L27 60 Z" fill="#ffffff" stroke="#333" stroke-width="1.1"/><path d="M37 31 q13 -4 27 0 v24 q-13 7 -27 0 z" fill="#cfe0e6" stroke="#333" stroke-width="1.1"/><path d="M37 31 q13 -4 27 0" fill="none" stroke="#222" stroke-width="2.2"/></g>
<g transform="translate(1593,520)"><rect x="0.5" y="0.5" width="71" height="71" fill="#fff" stroke="#a9a9a9" stroke-width="1"/><linearGradient id="geef3f0" x1="0" y1="0" x2="0" y2="1"><stop offset="0" stop-color="#eef3f0"/><stop offset="1" stop-color="#f4f8f8"/></linearGradient><rect x="3" y="3" width="66" height="34" fill="url(#geef3f0)"/><rect x="3" y="34" width="66" height="35" fill="#e0ddd0"/><line x1="6.500" y1="3" x2="8.500" y2="50" stroke="#3a3ab0" stroke-width="0.9"/><line x1="8.500" y1="50" x2="46" y2="68" stroke="#c85a5a" stroke-width="0.8"/><path d="M8 26 L30 10 L49 9 L27 27 Z" fill="#c9c9c9" stroke="#333" stroke-width="1.1"/><path d="M8 26 L27 27 L27 60 L9 52 Z" fill="#ffffff" stroke="#333" stroke-width="1.1"/><path d="M27 27 L49 9 L49 40 L27 60 Z" fill="#ffffff" stroke="#333" stroke-width="1.1"/><path d="M37 31 q13 -4 27 0 v24 q-13 7 -27 0 z" fill="#cfe0e6" stroke="#333" stroke-width="1.1"/><path d="M37 31 q13 -4 27 0" fill="none" stroke="#222" stroke-width="2.2"/></g>
<g transform="translate(1368,595)"><rect x="0.5" y="0.5" width="71" height="71" fill="#fff" stroke="#a9a9a9" stroke-width="1"/><linearGradient id="g8ccbe8" x1="0" y1="0" x2="0" y2="1"><stop offset="0" stop-color="#8ccbe8"/><stop offset="1" stop-color="#f4f8f8"/></linearGradient><rect x="3" y="3" width="66" height="34" fill="url(#g8ccbe8)"/><rect x="3" y="34" width="66" height="35" fill="#a6c69a"/><line x1="6.500" y1="3" x2="8.500" y2="50" stroke="#3a3ab0" stroke-width="0.9"/><line x1="8.500" y1="50" x2="46" y2="68" stroke="#c85a5a" stroke-width="0.8"/><path d="M8 26 L30 10 L49 9 L27 27 Z" fill="#c9c9c9" stroke="#333" stroke-width="1.1"/><path d="M8 26 L27 27 L27 60 L9 52 Z" fill="#ffffff" stroke="#333" stroke-width="1.1"/><path d="M27 27 L49 9 L49 40 L27 60 Z" fill="#ffffff" stroke="#333" stroke-width="1.1"/><path d="M37 31 q13 -4 27 0 v24 q-13 7 -27 0 z" fill="#cfe0e6" stroke="#333" stroke-width="1.1"/><path d="M37 31 q13 -4 27 0" fill="none" stroke="#222" stroke-width="2.2"/></g>
</g>
<rect x="1592" y="518.500" width="73.500" height="74" fill="none" stroke="#5f99d5" stroke-width="3.600"/>
<path d="M1618.500 559.500 v22.500 l5 -4.500 l4 8.500 l3.500 -1.700 l-4 -8.300 h7 z" fill="#fff" stroke="#111" stroke-width="1.300" stroke-linejoin="round"/>
<rect x="1594.500" y="591.500" width="114" height="22.500" fill="#ffffe6" stroke="#555" stroke-width="1"/>
<text x="1599.5" y="609.5" font-size="15.5" fill="#222" text-anchor="start" font-weight="normal" textLength="103" lengthAdjust="spacingAndGlyphs">Style par défaut</text>
</svg>
<div id="statusbar" class="abs"><svg width="1832" height="30" viewBox="0 994 1832 30">
<circle cx="17" cy="1013" r="13" fill="#fff" stroke="#8a8a8a" stroke-width="2"/><path d="M17 1004 a4.2 4.2 0 0 1 4.2 4.2 c0 3 -4.2 9 -4.2 9 c0 0 -4.2 -6 -4.2 -9 a4.2 4.2 0 0 1 4.2 -4.200 z" fill="#9a9a9a"/>
<circle cx="59" cy="1013" r="13" fill="#fff" stroke="#111" stroke-width="2.6"/><circle cx="59" cy="1006" r="2.4" fill="#111"/><path d="M55.5 1010 h7 v7 h-1.6 v7 h-3.800 v-7 h-1.600 z" fill="#111"/>
<circle cx="103" cy="1013" r="13" fill="#fff" stroke="#9a9a9a" stroke-width="2"/><circle cx="103" cy="1008.5" r="4.5" fill="#a8a8a8"/><path d="M94 1022 q0 -8 9 -8 q9 0 9 8 z" fill="#a8a8a8"/>
<rect x="130.500" y="1006" width="1.2" height="14" fill="#999"/>
<circle cx="152" cy="1013" r="12.5" fill="#2a59a8" stroke="#16356e" stroke-width="1.6"/>
<text x="152" y="1020.5" font-size="19" fill="#fff" text-anchor="middle" font-weight="bold">?</text>
<text x="190" y="1021.5" font-size="17.5" fill="#1e1e1e" text-anchor="start" font-weight="normal" textLength="1047" lengthAdjust="spacingAndGlyphs">Sélectionnez les objets. Appuyez sur Maj pour étendre la sélection. Faites glisser la souris pour sélectionner plusieurs objets.</text>
<rect x="1446" y="1007" width="1.2" height="12" fill="#777"/>
<text x="1462" y="1021.5" font-size="17.5" fill="#1e1e1e" text-anchor="start" font-weight="normal" textLength="72" lengthAdjust="spacingAndGlyphs">Mesures</text>
<rect x="1547.500" y="997.500" width="290" height="30" fill="#fff" stroke="#b9bccb" stroke-width="1.4"/>
</svg></div>
</div></body></html>
